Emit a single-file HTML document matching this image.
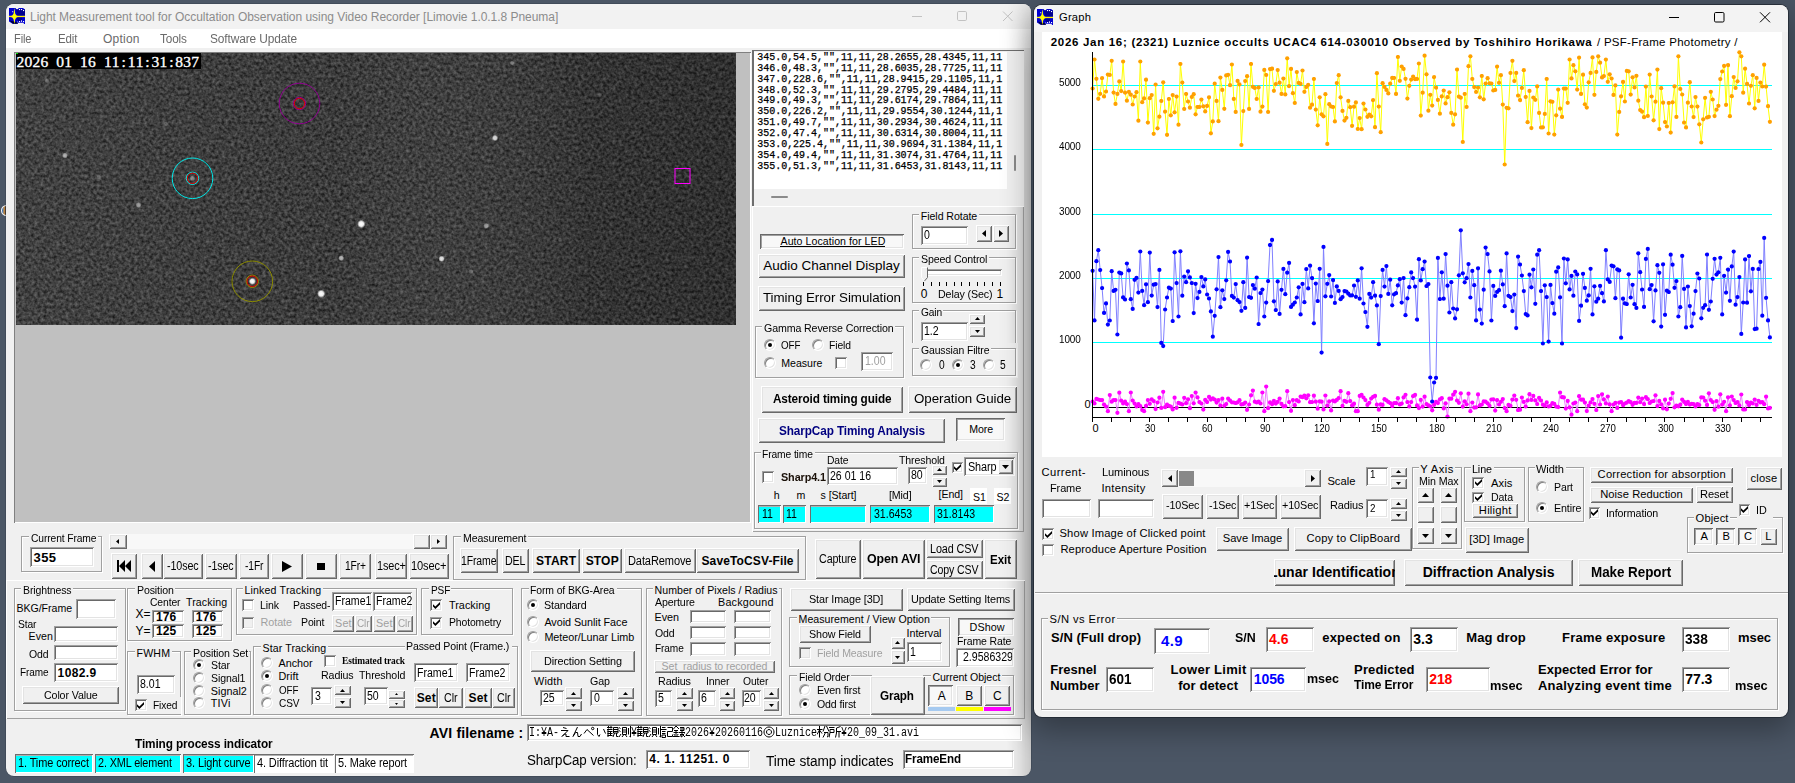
<!DOCTYPE html>
<html><head><meta charset="utf-8"><title>Limovie</title><style>
html,body{margin:0;padding:0}
body{width:1795px;height:783px;overflow:hidden;position:relative;background:#4b5665;font-family:"Liberation Sans",sans-serif;font-size:11px;color:#000}
div,span,svg{position:absolute;box-sizing:border-box}
.t{white-space:pre;display:block}
.b{background:#f0f0f0;box-shadow:inset 1px 1px 0 #fff,inset -1px -1px 0 #696969,inset 2px 2px 0 #e3e3e3,inset -2px -2px 0 #a0a0a0}
.pb{background:#f8f8f8;box-shadow:inset 1px 1px 0 #696969,inset -1px -1px 0 #fff,inset 2px 2px 0 #a0a0a0,inset -2px -2px 0 #e3e3e3}
.tb{background:#fff;box-shadow:inset 1px 1px 0 #a0a0a0,inset -1px -1px 0 #fff,inset 2px 2px 0 #696969,inset -2px -2px 0 #e3e3e3}
.tb1{background:#fff;box-shadow:inset 1px 1px 0 #6e6e6e,inset -1px -1px 0 #fff,inset 0 2px 0 #b0b0b0}
.gb{border:1px solid #a0a0a0;box-shadow:1px 1px 0 #fff,inset 1px 1px 0 #fff}
.rb{border-radius:50%;background:#fff;box-shadow:inset 1px 1px 0 #808080,inset -1px -1px 0 #e3e3e3;border:1px solid;border-color:#a0a0a0 #fff #fff #a0a0a0}
.rb i{position:absolute;left:3px;top:3px;width:4px;height:4px;border-radius:50%;background:#000}
.c{display:flex;align-items:center;justify-content:center}
.c svg{position:static}
.raised{box-shadow:inset 1px 1px 0 #fff,inset -1px -1px 0 #a0a0a0}
.sunk{box-shadow:inset 1px 1px 0 #a0a0a0,inset -1px -1px 0 #fff}
</style></head><body>
<div class="" style="left:0.5px;top:205px;width:11px;height:10.5px;border-radius:50%;background:linear-gradient(90deg,#1e6fd0,#d09040 25%,#181c28 45%);border:1.3px solid #f4f4f4;"></div>
<div class="" style="left:6px;top:4px;width:1025px;height:771.5px;background:#f0f0f0;border-radius:8px;overflow:hidden;box-shadow:0 0 0 0.5px rgba(40,48,60,.55);"><div style="left:0;top:0;width:1025px;height:25px;background:#f2f2f2"></div><div style="left:0;top:25px;width:1025px;height:18.5px;background:#fff"></div><div style="right:0;top:0;width:24px;height:772px;background:linear-gradient(90deg,rgba(0,0,0,0),rgba(0,0,0,.05) 45%,rgba(0,0,0,.17));-webkit-mask-image:linear-gradient(180deg,rgba(0,0,0,.3),#000 70px);mask-image:linear-gradient(180deg,rgba(0,0,0,.3),#000 70px)"></div></div>
<svg width="16" height="16" viewBox="0 0 16 16" style="left:9px;top:8px"><path d="M0 0H6.5L7.5 1.2H9L9.6 0H14L16 1.5V16H15L14.5 14.8H9L8.5 15.8H3.5L0 13.5Z" fill="#0000d0"/><path d="M7 1.5H16V7.5H8ZM7.5 9.5H13V13H9Z" fill="#000090"/><path d="M0 12L4 15.8H9L8.6 14.6L0.5 12.5Z" fill="#000030"/><rect x="0" y="7.8" width="16" height="1.3" fill="#fff000"/><path d="M5.4 0L6.2 5.4Q6.6 7.6 9.6 8.4Q6.6 9.2 6.2 11.4L5.4 16L4.6 11.4Q4.2 9.2 1.2 8.4Q4.2 7.6 4.6 5.4Z" fill="#ffff00"/><g fill="#fff"><rect x="10" y="1" width="1.1" height="1.1"/><rect x="12" y="1" width="1.1" height="1.1"/><rect x="14" y="2" width="1.1" height="1.1"/><rect x="3.2" y="3.2" width="1" height="1"/><rect x="10" y="13" width="1.1" height="1.1"/><rect x="12" y="12.4" width="1" height="1.4"/><rect x="14" y="13" width="1.1" height="1.1"/><rect x="8" y="13.3" width=".8" height="1.2" opacity=".6"/></g></svg>
<span class="t" style="left:30px;top:8.5px;height:16px;line-height:16px;font-size:12px;color:#8c8c8c;letter-spacing:-0.04px;">Light Measurement tool for Occultation Observation using Video Recorder [Limovie 1.0.1.8 Pneuma]</span>
<svg width="110" height="14" viewBox="0 0 110 14" style="left:908px;top:9px" fill="none" stroke="#c2c2c2" stroke-width="1"><path d="M4 7.5h10"/><rect x="49.5" y="2.5" width="9" height="9" rx="1.2"/><path d="M95 2.5l9.5 9.5M104.5 2.5l-9.5 9.5"/></svg>
<span class="t" style="left:13.6px;top:30.5px;height:16px;line-height:16px;font-size:12px;color:#6a6a6a;letter-spacing:-0.12px;transform:scaleX(0.9222);transform-origin:0 50%;">File</span>
<span class="t" style="left:57.5px;top:30.5px;height:16px;line-height:16px;font-size:12px;color:#6a6a6a;letter-spacing:-0.12px;transform:scaleX(0.9597);transform-origin:0 50%;">Edit</span>
<span class="t" style="left:103px;top:30.5px;height:16px;line-height:16px;font-size:12px;color:#6a6a6a;letter-spacing:0.23px;">Option</span>
<span class="t" style="left:160px;top:30.5px;height:16px;line-height:16px;font-size:12px;color:#6a6a6a;letter-spacing:-0.12px;transform:scaleX(0.9806);transform-origin:0 50%;">Tools</span>
<span class="t" style="left:210px;top:30.5px;height:16px;line-height:16px;font-size:12px;color:#6a6a6a;letter-spacing:-0.12px;transform:scaleX(0.992);transform-origin:0 50%;">Software Update</span>
<div class="" style="left:14px;top:52px;width:737px;height:470.5px;background:#c0c0c0;box-shadow:inset 1px 1px 0 #808080,inset -1px -1px 0 #fff;"></div>
<svg width="720" height="272" viewBox="0 0 720 272" style="left:16px;top:53px"><defs><filter id="nz" x="0" y="0" width="100%" height="100%" color-interpolation-filters="sRGB"><feTurbulence type="fractalNoise" baseFrequency="0.32" numOctaves="2" seed="7" result="n"/><feColorMatrix type="matrix" values="0.42 0 0 0 0.02  0.42 0 0 0 0.02  0.42 0 0 0 0.02  0 0 0 0 1"/></filter><radialGradient id="st"><stop offset="0" stop-color="#fff"/><stop offset=".55" stop-color="#fff" stop-opacity=".9"/><stop offset="1" stop-color="#fff" stop-opacity="0"/></radialGradient><linearGradient id="lg" x1="0" x2="1" y1="0" y2="0"><stop offset="0" stop-color="#fff" stop-opacity=".035"/><stop offset=".45" stop-color="#fff" stop-opacity=".005"/><stop offset=".8" stop-color="#000" stop-opacity=".12"/><stop offset="1" stop-color="#000" stop-opacity=".19"/></linearGradient></defs><rect width="720" height="272" fill="#383838"/><rect width="720" height="272" filter="url(#nz)"/><rect width="720" height="272" fill="url(#lg)"/>
<circle cx="345.3" cy="171" r="4.2" fill="url(#st)" opacity="1"/>
<circle cx="305.2" cy="240.7" r="4.2" fill="url(#st)" opacity="1"/>
<circle cx="236.3" cy="228.3" r="3.6" fill="url(#st)" opacity="1"/>
<circle cx="425.6" cy="205.8" r="3.2" fill="url(#st)" opacity="0.85"/>
<circle cx="479" cy="85" r="3.2" fill="url(#st)" opacity="0.8"/>
<circle cx="325.2" cy="205.2" r="3" fill="url(#st)" opacity="0.6"/>
<circle cx="470.3" cy="172.8" r="3" fill="url(#st)" opacity="0.5"/>
<circle cx="49" cy="102.5" r="3" fill="url(#st)" opacity="0.6"/>
<circle cx="122.5" cy="152" r="3" fill="url(#st)" opacity="0.5"/>
<circle cx="31" cy="27.8" r="2.6" fill="url(#st)" opacity="0.3"/>
<circle cx="496" cy="10" r="2.6" fill="url(#st)" opacity="0.3"/>
<circle cx="455" cy="218.4" r="2.6" fill="url(#st)" opacity="0.3"/>
<circle cx="83" cy="124" r="2.6" fill="url(#st)" opacity="0.25"/>
<circle cx="176.5" cy="125.3" r="3" fill="url(#st)" opacity="0.35"/>
<circle cx="150" cy="71" r="2.5" fill="url(#st)" opacity="0.2"/>
<circle cx="227" cy="247" r="2.5" fill="url(#st)" opacity="0.2"/>
<circle cx="584" cy="42" r="2.5" fill="url(#st)" opacity="0.15"/>
<circle cx="544" cy="187" r="2.5" fill="url(#st)" opacity="0.15"/>
<circle cx="283.5" cy="50.5" r="20.3" fill="none" stroke="#900090" stroke-width="1"/><circle cx="283.5" cy="50.5" r="6.2" fill="none" stroke="#900090" stroke-width="1"/><circle cx="283.5" cy="50.5" r="5.2" fill="none" stroke="#e00000" stroke-width="1"/>
<circle cx="176.5" cy="125.3" r="20.3" fill="none" stroke="#00e8e8" stroke-width="1"/><circle cx="176.5" cy="125.3" r="6.2" fill="none" stroke="#00e8e8" stroke-width="1"/><circle cx="176.5" cy="125.3" r="5.2" fill="none" stroke="#e00000" stroke-width="1"/>
<circle cx="236.3" cy="228.3" r="20.3" fill="none" stroke="#8c8c00" stroke-width="1"/><circle cx="236.3" cy="228.3" r="6.2" fill="none" stroke="#8c8c00" stroke-width="1"/><circle cx="236.3" cy="228.3" r="5.2" fill="none" stroke="#e00000" stroke-width="1"/>
<rect x="659.0" y="115.5" width="15" height="15" fill="none" stroke="#ff00ff" stroke-width="1"/>
</svg>
<div class="" style="left:16px;top:53px;width:184.5px;height:16px;background:#000;"></div>
<span class="t" style="left:16.5px;top:52.5px;height:17px;line-height:17px;font-family:'Liberation Serif',serif;font-weight:normal;-webkit-text-stroke:0.35px #fff;font-size:15.5px;color:#fff"><b style="font-weight:normal;display:inline-block;width:7.95px;text-align:center">2</b><b style="font-weight:normal;display:inline-block;width:7.95px;text-align:center">0</b><b style="font-weight:normal;display:inline-block;width:7.95px;text-align:center">2</b><b style="font-weight:normal;display:inline-block;width:7.95px;text-align:center">6</b><b style="font-weight:normal;display:inline-block;width:7.95px;text-align:center">&nbsp;</b><b style="font-weight:normal;display:inline-block;width:7.95px;text-align:center">0</b><b style="font-weight:normal;display:inline-block;width:7.95px;text-align:center">1</b><b style="font-weight:normal;display:inline-block;width:7.95px;text-align:center">&nbsp;</b><b style="font-weight:normal;display:inline-block;width:7.95px;text-align:center">1</b><b style="font-weight:normal;display:inline-block;width:7.95px;text-align:center">6</b><b style="font-weight:normal;display:inline-block;width:7.95px;text-align:center">&nbsp;</b><b style="font-weight:normal;display:inline-block;width:7.95px;text-align:center">1</b><b style="font-weight:normal;display:inline-block;width:7.95px;text-align:center">1</b><b style="font-weight:normal;display:inline-block;width:7.95px;text-align:center">:</b><b style="font-weight:normal;display:inline-block;width:7.95px;text-align:center">1</b><b style="font-weight:normal;display:inline-block;width:7.95px;text-align:center">1</b><b style="font-weight:normal;display:inline-block;width:7.95px;text-align:center">:</b><b style="font-weight:normal;display:inline-block;width:7.95px;text-align:center">3</b><b style="font-weight:normal;display:inline-block;width:7.95px;text-align:center">1</b><b style="font-weight:normal;display:inline-block;width:7.95px;text-align:center">:</b><b style="font-weight:normal;display:inline-block;width:7.95px;text-align:center">8</b><b style="font-weight:normal;display:inline-block;width:7.95px;text-align:center">3</b><b style="font-weight:normal;display:inline-block;width:7.95px;text-align:center">7</b></span>
<div style="left:16px;top:53px;width:2px;height:1px;background:#00e000"></div>
<div class="" style="left:752px;top:50px;width:271.5px;height:157px;background:#f0f0f0;box-shadow:inset 2px 1px 0 #6e6e6e;"></div>
<div class="" style="left:754px;top:52px;width:253px;height:136.5px;background:#fff;"></div>
<div class="t" style="left:757.3px;top:52.7px;width:246px;-webkit-text-stroke:0.25px #000;font-family:'Liberation Mono',monospace;font-size:10px;line-height:10.93px;letter-spacing:-0.03px;color:#000">345.0,54.5,"",11,11,28.2655,28.4345,11,11<br>346.0,48.3,"",11,11,28.6035,28.7725,11,11<br>347.0,228.6,"",11,11,28.9415,29.1105,11,1<br>348.0,52.3,"",11,11,29.2795,29.4484,11,11<br>349.0,49.3,"",11,11,29.6174,29.7864,11,11<br>350.0,226.2,"",11,11,29.9554,30.1244,11,1<br>351.0,49.7,"",11,11,30.2934,30.4624,11,11<br>352.0,47.4,"",11,11,30.6314,30.8004,11,11<br>353.0,225.4,"",11,11,30.9694,31.1384,11,1<br>354.0,49.4,"",11,11,31.3074,31.4764,11,11<br>355.0,51.3,"",11,11,31.6453,31.8143,11,11</div>
<div class="" style="left:1014px;top:154.5px;width:2px;height:16.5px;background:#8a8a8a;border-radius:1px;"></div>
<div class="" style="left:771px;top:196px;width:17px;height:2px;background:#8a8a8a;border-radius:1px;"></div>
<div class="raised" style="left:752px;top:206px;width:271.5px;height:325.5px;"></div>
<div class="pb" style="left:760px;top:233.5px;width:144px;height:15.5px;"></div>
<span class="t" style="left:780.5px;top:234.35px;height:15px;line-height:15px;font-size:10.6px;letter-spacing:0.06px;">Auto Location for LED</span>
<div style="left:779.5px;top:246.4px;width:105.5px;height:1px;background:#000"></div>
<div class="b" style="left:758px;top:253.5px;width:147px;height:24.5px;"></div>
<span class="t" style="left:763.25px;top:257.05px;height:18px;line-height:18px;font-size:13.5px;">Audio Channel Display</span>
<div class="b" style="left:758px;top:285.5px;width:147px;height:25px;"></div>
<span class="t" style="left:762.5px;top:289.3px;height:18px;line-height:18px;font-size:13.5px;letter-spacing:-0.05px;transform:scaleX(0.9897);transform-origin:0 50%;">Timing Error Simulation</span>
<div class="gb" style="left:912px;top:214px;width:103.5px;height:34.8px;"></div>
<div class="" style="left:919.3px;top:210px;width:59.5px;height:13px;background:#f0f0f0;"></div>
<span class="t" style="left:920.8px;top:208.9px;height:15px;line-height:15px;font-size:10.6px;letter-spacing:-0.06px;">Field Rotate</span>
<div class="tb" style="left:920.5px;top:225.5px;width:47.5px;height:19.5px;"></div>
<span class="t" style="left:924px;top:227.25px;height:16px;line-height:16px;font-size:12px;transform:scaleX(0.88);transform-origin:0 50%;">0</span>
<div class="b c" style="left:976px;top:225px;width:16px;height:17px;"><svg width="4" height="7" viewBox="0 0 4 7"><polygon points="4,0 4,7 0,3.5" fill="#000"/></svg></div>
<div class="b c" style="left:993px;top:225px;width:16px;height:17px;"><svg width="4" height="7" viewBox="0 0 4 7"><polygon points="0,0 0,7 4,3.5" fill="#000"/></svg></div>
<div class="gb" style="left:912px;top:257px;width:103.5px;height:46.3px;"></div>
<div class="" style="left:919.3px;top:253px;width:69.5px;height:13px;background:#f0f0f0;"></div>
<span class="t" style="left:920.8px;top:251.9px;height:15px;line-height:15px;font-size:10.6px;letter-spacing:-0.12px;transform:scaleX(1.0026);transform-origin:0 50%;">Speed Control</span>
<div class="tb" style="left:922.5px;top:269px;width:79.5px;height:7px;"></div>
<div class="" style="left:923.3px;top:282.3px;width:1px;height:3.3px;background:#000;"></div>
<div class="" style="left:930.93px;top:282.3px;width:1px;height:3.3px;background:#000;"></div>
<div class="" style="left:938.56px;top:282.3px;width:1px;height:3.3px;background:#000;"></div>
<div class="" style="left:946.19px;top:282.3px;width:1px;height:3.3px;background:#000;"></div>
<div class="" style="left:953.82px;top:282.3px;width:1px;height:3.3px;background:#000;"></div>
<div class="" style="left:961.45px;top:282.3px;width:1px;height:3.3px;background:#000;"></div>
<div class="" style="left:969.08px;top:282.3px;width:1px;height:3.3px;background:#000;"></div>
<div class="" style="left:976.71px;top:282.3px;width:1px;height:3.3px;background:#000;"></div>
<div class="" style="left:984.34px;top:282.3px;width:1px;height:3.3px;background:#000;"></div>
<div class="" style="left:991.97px;top:282.3px;width:1px;height:3.3px;background:#000;"></div>
<div class="" style="left:999.6px;top:282.3px;width:1px;height:3.3px;background:#000;"></div>
<svg width="8" height="15" viewBox="0 0 8 15" style="left:920.5px;top:266.5px"><path d="M0.5 0.5h6v10l-3 3.5l-3-3.5z" fill="#f0f0f0" stroke="#fff" stroke-width="1"/><path d="M6.5 0.5v10l-3 3.5" fill="none" stroke="#696969" stroke-width="1"/></svg>
<span class="t" style="left:920.8px;top:286px;height:16px;line-height:16px;font-size:12px;letter-spacing:-0.4px;">0</span>
<span class="t" style="left:937.6px;top:286.5px;height:15px;line-height:15px;font-size:10.8px;letter-spacing:-0.12px;transform:scaleX(0.9888);transform-origin:0 50%;">Delay (Sec)</span>
<span class="t" style="left:996.5px;top:286px;height:16px;line-height:16px;font-size:12px;letter-spacing:-0.4px;">1</span>
<div class="gb" style="left:912px;top:310px;width:103.5px;height:41.5px;"></div>
<div class="" style="left:919.3px;top:306px;width:24.2px;height:13px;background:#f0f0f0;"></div>
<span class="t" style="left:920.8px;top:304.9px;height:15px;line-height:15px;font-size:10.6px;letter-spacing:-0.12px;transform:scaleX(0.9623);transform-origin:0 50%;">Gain</span>
<div class="tb" style="left:920.5px;top:322px;width:47.5px;height:18.5px;"></div>
<span class="t" style="left:923.5px;top:323.25px;height:16px;line-height:16px;font-size:12px;transform:scaleX(0.88);transform-origin:0 50%;">1.2</span>
<div class="b c" style="left:969.3px;top:313.7px;width:16px;height:10.6px;"><svg width="5" height="3" viewBox="0 0 5 3"><polygon points="0,3 5,3 2.5,0" fill="#000"/></svg></div>
<div class="b c" style="left:969.3px;top:325.7px;width:16px;height:11.8px;"><svg width="5" height="3" viewBox="0 0 5 3"><polygon points="0,0 5,0 2.5,3" fill="#000"/></svg></div>
<div class="" style="left:910px;top:343px;width:108px;height:35px;background:#f0f0f0;"></div>
<div class="gb" style="left:912px;top:348.3px;width:103.5px;height:28px;"></div>
<div class="" style="left:919.3px;top:344.3px;width:71.5px;height:13px;background:#f0f0f0;"></div>
<span class="t" style="left:920.8px;top:343.2px;height:15px;line-height:15px;font-size:10.6px;letter-spacing:-0.12px;transform:scaleX(0.9842);transform-origin:0 50%;">Gaussian Filtre</span>
<div class="rb" style="left:920.4px;top:358.6px;width:12px;height:12px;"></div>
<span class="t" style="left:938.9px;top:357px;height:16px;line-height:16px;font-size:12px;letter-spacing:-0.4px;transform:scaleX(0.85);transform-origin:0 50%;">0</span>
<div class="rb" style="left:952px;top:358.6px;width:12px;height:12px;"><i></i></div>
<span class="t" style="left:969.6px;top:357px;height:16px;line-height:16px;font-size:12px;letter-spacing:-0.4px;transform:scaleX(0.85);transform-origin:0 50%;">3</span>
<div class="rb" style="left:983px;top:358.6px;width:12px;height:12px;"></div>
<span class="t" style="left:1000.2px;top:357px;height:16px;line-height:16px;font-size:12px;letter-spacing:-0.4px;transform:scaleX(0.85);transform-origin:0 50%;">5</span>
<div class="gb" style="left:754.5px;top:326px;width:149.5px;height:52px;"></div>
<div class="" style="left:762.1px;top:322px;width:132.7px;height:13px;background:#f0f0f0;"></div>
<span class="t" style="left:763.6px;top:320.9px;height:15px;line-height:15px;font-size:10.6px;letter-spacing:-0.12px;transform:scaleX(1.0039);transform-origin:0 50%;">Gamma Reverse Correction</span>
<div class="rb" style="left:763.6px;top:338.7px;width:12px;height:12px;"><i></i></div>
<span class="t" style="left:781.3px;top:337.5px;height:15px;line-height:15px;font-size:10.6px;letter-spacing:-0.12px;transform:scaleX(0.9258);transform-origin:0 50%;">OFF</span>
<div class="rb" style="left:811.7px;top:338.7px;width:12px;height:12px;"></div>
<span class="t" style="left:829.3px;top:337.5px;height:15px;line-height:15px;font-size:10.6px;letter-spacing:-0.12px;transform:scaleX(0.978);transform-origin:0 50%;">Field</span>
<div class="rb" style="left:763.6px;top:357px;width:12px;height:12px;"></div>
<span class="t" style="left:781.3px;top:356px;height:15px;line-height:15px;font-size:10.6px;letter-spacing:-0.04px;">Measure</span>
<div class="tb" style="left:835px;top:357.2px;width:12px;height:12px;"></div>
<div class="tb" style="left:861px;top:351.5px;width:32px;height:19.5px;"></div>
<span class="t" style="left:864.5px;top:353.25px;height:16px;line-height:16px;font-size:12px;color:#a0a0a0;transform:scaleX(0.88);transform-origin:0 50%;">1.00</span>
<div class="b" style="left:760.5px;top:385.5px;width:142.5px;height:27px;"></div>
<span class="t" style="left:772.5px;top:391.3px;height:16px;line-height:16px;font-size:12px;font-weight:bold;letter-spacing:-0.12px;transform:scaleX(0.9799);transform-origin:0 50%;">Asteroid timing guide</span>
<div class="b" style="left:908px;top:385.5px;width:109px;height:27px;"></div>
<span class="t" style="left:913.85px;top:390.3px;height:18px;line-height:18px;font-size:13.5px;letter-spacing:-0.05px;transform:scaleX(0.9892);transform-origin:0 50%;">Operation Guide</span>
<div class="b" style="left:758px;top:417.5px;width:187px;height:25.5px;"></div>
<span class="t" style="left:778.5px;top:422.55px;height:16px;line-height:16px;font-size:12.5px;font-weight:bold;color:#000080;letter-spacing:-0.12px;transform:scaleX(0.9424);transform-origin:0 50%;">SharpCap Timing Analysis</span>
<div class="pb" style="left:956px;top:417.5px;width:48.5px;height:23.3px;"></div>
<span class="t" style="left:969.35px;top:422.25px;height:15px;line-height:15px;font-size:10.6px;letter-spacing:-0.12px;">More</span>
<div class="gb" style="left:753.5px;top:452px;width:264.1px;height:77.3px;"></div>
<div class="" style="left:760.8px;top:448px;width:54px;height:13px;background:#f0f0f0;"></div>
<span class="t" style="left:762.3px;top:446.9px;height:15px;line-height:15px;font-size:10.6px;letter-spacing:-0.12px;transform:scaleX(0.9711);transform-origin:0 50%;">Frame time</span>
<div class="tb" style="left:762.3px;top:471px;width:12px;height:12px;"></div>
<span class="t" style="left:780.9px;top:469.3px;height:16px;line-height:16px;font-size:11.5px;font-weight:bold;color:#1a1008;letter-spacing:-0.12px;transform:scaleX(0.9427);transform-origin:0 50%;">Sharp4.1</span>
<span class="t" style="left:826.6px;top:452.5px;height:15px;line-height:15px;font-size:10.6px;letter-spacing:-0.12px;transform:scaleX(0.9759);transform-origin:0 50%;">Date</span>
<div class="tb" style="left:826.6px;top:466.5px;width:71.2px;height:18.7px;"></div>
<span class="t" style="left:829.5px;top:467.85px;height:16px;line-height:16px;font-size:12px;transform:scaleX(0.88);transform-origin:0 50%;">26 01 16</span>
<span class="t" style="left:899.3px;top:452.5px;height:15px;line-height:15px;font-size:10.6px;letter-spacing:-0.12px;transform:scaleX(0.9962);transform-origin:0 50%;">Threshold</span>
<div class="tb" style="left:908.2px;top:466.5px;width:18.6px;height:17px;"></div>
<span class="t" style="left:911px;top:467px;height:16px;line-height:16px;font-size:12px;transform:scaleX(0.88);transform-origin:0 50%;">80</span>
<div class="b c" style="left:932.4px;top:465px;width:15px;height:9.7px;"><svg width="5" height="3" viewBox="0 0 5 3"><polygon points="0,3 5,3 2.5,0" fill="#000"/></svg></div>
<div class="b c" style="left:932.4px;top:476.7px;width:15px;height:10.5px;"><svg width="5" height="3" viewBox="0 0 5 3"><polygon points="0,0 5,0 2.5,3" fill="#000"/></svg></div>
<div class="tb" style="left:951.6px;top:461.5px;width:11.5px;height:11.5px;"><svg width="9" height="9" viewBox="0 0 9 9" style="position:absolute;left:1.25px;top:1.25px"><path d="M1 3.2 L3.4 5.6 L8 1 L8 3.4 L3.4 8 L1 5.6 Z" fill="#000"/></svg></div>
<div class="tb" style="left:964.2px;top:457.2px;width:50.8px;height:19px;"></div>
<span class="t" style="left:967.6px;top:458.7px;height:16px;line-height:16px;font-size:12px;letter-spacing:-0.12px;transform:scaleX(0.9036);transform-origin:0 50%;">Sharp</span>
<div class="b c" style="left:998.3px;top:459.2px;width:14.7px;height:15px;"><svg width="7" height="4" viewBox="0 0 7 4"><polygon points="0,0 7,0 3.5,4" fill="#000"/></svg></div>
<span class="t" style="left:773.8px;top:488px;height:15px;line-height:15px;font-size:10.6px;letter-spacing:-0.4px;">h</span>
<span class="t" style="left:796.4px;top:488px;height:15px;line-height:15px;font-size:10.6px;letter-spacing:-0.4px;">m</span>
<span class="t" style="left:820.6px;top:488px;height:15px;line-height:15px;font-size:10.6px;letter-spacing:-0.07px;">s [Start]</span>
<span class="t" style="left:888.8px;top:488px;height:15px;line-height:15px;font-size:10.6px;letter-spacing:-0.12px;transform:scaleX(1.0049);transform-origin:0 50%;">[Mid]</span>
<span class="t" style="left:938.5px;top:486.5px;height:15px;line-height:15px;font-size:10.6px;letter-spacing:-0.06px;">[End]</span>
<div class="" style="left:970.4px;top:487.5px;width:17px;height:16px;background:#fff;"></div>
<span class="t" style="left:973px;top:489.5px;height:15px;line-height:15px;font-size:10.6px;">S1</span>
<div class="" style="left:993.8px;top:487.5px;width:17.5px;height:16px;background:#fff;"></div>
<span class="t" style="left:996.5px;top:489.5px;height:15px;line-height:15px;font-size:10.6px;">S2</span>
<div class="tb1" style="left:758.2px;top:504.5px;width:23.1px;height:18.7px;background:#00ffff;"></div>
<span class="t" style="left:761.5px;top:505.85px;height:16px;line-height:16px;font-size:12px;transform:scaleX(0.88);transform-origin:0 50%;">11</span>
<div class="tb1" style="left:782.5px;top:504.5px;width:23.5px;height:18.7px;background:#00ffff;"></div>
<span class="t" style="left:786px;top:505.85px;height:16px;line-height:16px;font-size:12px;transform:scaleX(0.88);transform-origin:0 50%;">11</span>
<div class="tb1" style="left:810px;top:504.5px;width:56px;height:18.7px;background:#00ffff;"></div>
<div class="tb1" style="left:870.2px;top:504.5px;width:59.4px;height:18.7px;background:#00ffff;"></div>
<span class="t" style="left:873.5px;top:505.85px;height:16px;line-height:16px;font-size:12px;transform:scaleX(0.88);transform-origin:0 50%;">31.6453</span>
<div class="tb1" style="left:934px;top:504.5px;width:59.6px;height:18.7px;background:#00ffff;"></div>
<span class="t" style="left:937.2px;top:505.85px;height:16px;line-height:16px;font-size:12px;transform:scaleX(0.88);transform-origin:0 50%;">31.8143</span>
<div class="gb" style="left:21px;top:536px;width:81px;height:35.5px;"></div>
<div class="" style="left:29.1px;top:532px;width:68.5px;height:13px;background:#f0f0f0;"></div>
<span class="t" style="left:30.6px;top:530.9px;height:15px;line-height:15px;font-size:10.6px;letter-spacing:-0.12px;transform:scaleX(0.9707);transform-origin:0 50%;">Current Frame</span>
<div class="tb" style="left:30.2px;top:547.3px;width:63.8px;height:19.7px;"></div>
<span class="t" style="left:33.5px;top:548.65px;height:17px;line-height:17px;font-size:13px;font-weight:bold;letter-spacing:0.4px;">355</span>
<div class="" style="left:109px;top:534px;width:338px;height:14.7px;background:#f8f8f8;"></div>
<div class="b c" style="left:109px;top:534px;width:17.7px;height:14.7px;"><svg width="3" height="5" viewBox="0 0 3 5"><polygon points="3,0 3,5 0,2.5" fill="#000"/></svg></div>
<div class="b c" style="left:430px;top:534px;width:17px;height:14.7px;"><svg width="3" height="5" viewBox="0 0 3 5"><polygon points="0,0 0,5 3,2.5" fill="#000"/></svg></div>
<div class="b" style="left:413px;top:534px;width:17px;height:14.7px;"></div>
<div class="b" style="left:111px;top:553px;width:26px;height:26px;"></div>
<div class="b" style="left:141px;top:553px;width:22px;height:26px;"></div>
<div class="b" style="left:163px;top:553px;width:40px;height:26px;"></div>
<span class="t" style="left:167.15px;top:558.3px;height:16px;line-height:16px;font-size:12px;letter-spacing:-0.12px;transform:scaleX(0.895);transform-origin:0 50%;">-10sec</span>
<div class="b" style="left:205px;top:553px;width:32px;height:26px;"></div>
<span class="t" style="left:208.25px;top:558.3px;height:16px;line-height:16px;font-size:12px;letter-spacing:-0.12px;transform:scaleX(0.8835);transform-origin:0 50%;">-1sec</span>
<div class="b" style="left:239px;top:553px;width:30px;height:26px;"></div>
<span class="t" style="left:244.75px;top:558.3px;height:16px;line-height:16px;font-size:12px;letter-spacing:-0.12px;transform:scaleX(0.855);transform-origin:0 50%;">-1Fr</span>
<div class="b" style="left:271px;top:553px;width:32px;height:26px;"></div>
<div class="b" style="left:305px;top:553px;width:32px;height:26px;"></div>
<div class="b" style="left:339px;top:553px;width:32px;height:26px;"></div>
<span class="t" style="left:344.5px;top:558.3px;height:16px;line-height:16px;font-size:12px;letter-spacing:-0.12px;transform:scaleX(0.852);transform-origin:0 50%;">1Fr+</span>
<div class="b" style="left:375px;top:553px;width:32px;height:26px;"></div>
<span class="t" style="left:376.5px;top:558.3px;height:16px;line-height:16px;font-size:12px;letter-spacing:-0.12px;transform:scaleX(0.9098);transform-origin:0 50%;">1sec+</span>
<div class="b" style="left:409px;top:553px;width:40px;height:26px;"></div>
<span class="t" style="left:411.25px;top:558.3px;height:16px;line-height:16px;font-size:12px;letter-spacing:-0.12px;transform:scaleX(0.9238);transform-origin:0 50%;">10sec+</span>
<svg width="14" height="12" viewBox="0 0 14 12" style="left:117.3px;top:560.3px"><rect x="0" y="0" width="2" height="12"/><path d="M8 0v12l-6-6zM14 0v12l-6-6z"/></svg>
<svg width="6" height="11" viewBox="0 0 6 11" style="left:148.5px;top:560.7px"><path d="M6 0v11l-6-5.5z"/></svg>
<svg width="10" height="11" viewBox="0 0 10 11" style="left:281.5px;top:560.7px"><path d="M0 0v11l10-5.5z"/></svg>
<div class="" style="left:317px;top:563px;width:8px;height:7px;background:#000;"></div>
<div class="gb" style="left:453px;top:536px;width:353px;height:43.5px;"></div>
<div class="" style="left:461.1px;top:532px;width:66.6px;height:13px;background:#f0f0f0;"></div>
<span class="t" style="left:462.6px;top:530.9px;height:15px;line-height:15px;font-size:10.6px;letter-spacing:-0.12px;transform:scaleX(0.9999);transform-origin:0 50%;">Measurement</span>
<div class="b" style="left:460px;top:548px;width:38px;height:25px;"></div>
<span class="t" style="left:461.25px;top:552.8px;height:16px;line-height:16px;font-size:12px;letter-spacing:-0.12px;transform:scaleX(0.8713);transform-origin:0 50%;">1Frame</span>
<div class="b" style="left:502px;top:548px;width:27px;height:25px;"></div>
<span class="t" style="left:505.25px;top:552.8px;height:16px;line-height:16px;font-size:12px;letter-spacing:-0.12px;transform:scaleX(0.8873);transform-origin:0 50%;">DEL</span>
<div class="b" style="left:532px;top:548px;width:48px;height:25px;"></div>
<span class="t" style="left:536px;top:552.8px;height:16px;line-height:16px;font-size:12px;font-weight:bold;letter-spacing:0.22px;">START</span>
<div class="b" style="left:582.3px;top:548px;width:39.7px;height:25px;"></div>
<span class="t" style="left:585.65px;top:552.8px;height:16px;line-height:16px;font-size:12px;font-weight:bold;letter-spacing:0.18px;">STOP</span>
<div class="b" style="left:624px;top:548px;width:72px;height:25px;"></div>
<span class="t" style="left:628.25px;top:552.8px;height:16px;line-height:16px;font-size:12px;letter-spacing:-0.12px;transform:scaleX(0.9209);transform-origin:0 50%;">DataRemove</span>
<div class="b" style="left:696px;top:548px;width:103px;height:25px;"></div>
<span class="t" style="left:701.5px;top:552.8px;height:16px;line-height:16px;font-size:12px;font-weight:bold;letter-spacing:0.12px;">SaveToCSV-File</span>
<div class="b" style="left:814.5px;top:539.3px;width:46.2px;height:39.4px;"></div>
<span class="t" style="left:818.85px;top:551.3px;height:16px;line-height:16px;font-size:12px;letter-spacing:-0.12px;transform:scaleX(0.8935);transform-origin:0 50%;">Capture</span>
<div class="b" style="left:862px;top:539.3px;width:63px;height:39.4px;"></div>
<span class="t" style="left:866.75px;top:551.3px;height:16px;line-height:16px;font-size:12.5px;font-weight:bold;letter-spacing:-0.12px;transform:scaleX(0.9903);transform-origin:0 50%;">Open AVI</span>
<div class="b" style="left:926px;top:539.3px;width:57px;height:19.2px;"></div>
<span class="t" style="left:930.25px;top:541.2px;height:16px;line-height:16px;font-size:12px;letter-spacing:-0.12px;transform:scaleX(0.9004);transform-origin:0 50%;">Load CSV</span>
<div class="b" style="left:926px;top:559.5px;width:57px;height:19.2px;"></div>
<span class="t" style="left:930.25px;top:561.9px;height:16px;line-height:16px;font-size:12px;letter-spacing:-0.12px;transform:scaleX(0.8789);transform-origin:0 50%;">Copy CSV</span>
<div class="b" style="left:984px;top:539.3px;width:33px;height:39.4px;"></div>
<span class="t" style="left:990px;top:550.8px;height:17px;line-height:17px;font-size:13px;font-weight:bold;letter-spacing:-0.05px;transform:scaleX(0.8864);transform-origin:0 50%;">Exit</span>
<div class="raised" style="left:6px;top:579.5px;width:1018.5px;height:139.5px;"></div>
<div class="gb" style="left:13.5px;top:588.2px;width:112.5px;height:122.8px;"></div>
<div class="" style="left:21.1px;top:584.2px;width:51.6px;height:13px;background:#f0f0f0;"></div>
<span class="t" style="left:22.6px;top:583.1px;height:15px;line-height:15px;font-size:10.6px;letter-spacing:-0.12px;transform:scaleX(0.9918);transform-origin:0 50%;">Brightness</span>
<span class="t" style="left:16.4px;top:600.5px;height:15px;line-height:15px;font-size:10.6px;letter-spacing:-0.03px;">BKG/Frame</span>
<div class="tb" style="left:76.3px;top:599.4px;width:39.7px;height:19.4px;"></div>
<span class="t" style="left:18.2px;top:616.5px;height:15px;line-height:15px;font-size:10.6px;letter-spacing:-0.12px;transform:scaleX(0.9696);transform-origin:0 50%;">Star</span>
<span class="t" style="left:28.6px;top:629px;height:15px;line-height:15px;font-size:10.6px;letter-spacing:0.08px;">Even</span>
<div class="tb" style="left:54.3px;top:625.5px;width:63.5px;height:16px;"></div>
<span class="t" style="left:28.6px;top:646.7px;height:15px;line-height:15px;font-size:10.6px;letter-spacing:-0.12px;transform:scaleX(0.9901);transform-origin:0 50%;">Odd</span>
<div class="tb" style="left:54.3px;top:644.7px;width:63.5px;height:15.8px;"></div>
<span class="t" style="left:20.4px;top:665.2px;height:15px;line-height:15px;font-size:10.6px;letter-spacing:-0.12px;transform:scaleX(0.9454);transform-origin:0 50%;">Frame</span>
<div class="tb" style="left:54.3px;top:663.2px;width:63.5px;height:18.6px;"></div>
<span class="t" style="left:57.6px;top:664.5px;height:16px;line-height:16px;font-size:12px;font-weight:bold;letter-spacing:0.38px;">1082.9</span>
<div class="b" style="left:22.2px;top:686.3px;width:97.1px;height:17.5px;"></div>
<span class="t" style="left:43.9px;top:687.85px;height:15px;line-height:15px;font-size:10.6px;letter-spacing:-0.12px;transform:scaleX(1.0056);transform-origin:0 50%;">Color Value</span>
<div class="gb" style="left:127.3px;top:588.2px;width:104.7px;height:53.1px;"></div>
<div class="" style="left:135px;top:584.2px;width:39.8px;height:13px;background:#f0f0f0;"></div>
<span class="t" style="left:136.5px;top:583.1px;height:15px;line-height:15px;font-size:10.6px;letter-spacing:-0.12px;transform:scaleX(0.9981);transform-origin:0 50%;">Position</span>
<span class="t" style="left:150.4px;top:595px;height:15px;line-height:15px;font-size:10.6px;letter-spacing:-0.12px;transform:scaleX(0.9771);transform-origin:0 50%;">Center</span>
<span class="t" style="left:186px;top:595px;height:15px;line-height:15px;font-size:10.6px;letter-spacing:0.12px;">Tracking</span>
<span class="t" style="left:135.6px;top:606px;height:16px;line-height:16px;font-size:12px;">X=</span>
<span class="t" style="left:135.6px;top:622.5px;height:16px;line-height:16px;font-size:12px;">Y=</span>
<div class="tb" style="left:152.2px;top:609.7px;width:31.4px;height:13.7px;"></div>
<span class="t" style="left:155.9px;top:609.05px;height:16px;line-height:16px;font-size:12px;font-weight:bold;letter-spacing:0.19px;">176</span>
<div class="tb" style="left:152.2px;top:624.2px;width:31.4px;height:13.4px;"></div>
<span class="t" style="left:155.9px;top:623.4px;height:16px;line-height:16px;font-size:12px;font-weight:bold;letter-spacing:0.19px;">125</span>
<div class="tb" style="left:192.1px;top:609.7px;width:31.4px;height:13.7px;"></div>
<span class="t" style="left:195.8px;top:609.05px;height:16px;line-height:16px;font-size:12px;font-weight:bold;letter-spacing:0.19px;">176</span>
<div class="tb" style="left:192.1px;top:624.2px;width:31.4px;height:13.4px;"></div>
<span class="t" style="left:195.8px;top:623.4px;height:16px;line-height:16px;font-size:12px;font-weight:bold;letter-spacing:0.19px;">125</span>
<div class="gb" style="left:127.3px;top:651.3px;width:54.2px;height:63.5px;"></div>
<div class="" style="left:135px;top:647.3px;width:36.5px;height:13px;background:#f0f0f0;"></div>
<span class="t" style="left:136.5px;top:646.2px;height:15px;line-height:15px;font-size:10.6px;letter-spacing:0.18px;">FWHM</span>
<div class="tb" style="left:137px;top:674.5px;width:37.5px;height:19.5px;"></div>
<span class="t" style="left:140.3px;top:676.25px;height:16px;line-height:16px;font-size:12px;transform:scaleX(0.88);transform-origin:0 50%;">8.01</span>
<div class="" style="left:147px;top:697px;width:34px;height:17px;background:#f0f0f0;"></div>
<div class="tb" style="left:134.5px;top:699.4px;width:12px;height:12px;"><svg width="9" height="9" viewBox="0 0 9 9" style="position:absolute;left:1.5px;top:1.5px"><path d="M1 3.2 L3.4 5.6 L8 1 L8 3.4 L3.4 8 L1 5.6 Z" fill="#000"/></svg></div>
<span class="t" style="left:152.8px;top:698.3px;height:15px;line-height:15px;font-size:10.6px;letter-spacing:-0.12px;transform:scaleX(0.963);transform-origin:0 50%;">Fixed</span>
<div class="gb" style="left:183.5px;top:651.3px;width:67.5px;height:63.5px;"></div>
<div class="" style="left:191.2px;top:647.3px;width:58.3px;height:13px;background:#f0f0f0;"></div>
<span class="t" style="left:192.7px;top:646.2px;height:15px;line-height:15px;font-size:10.6px;letter-spacing:-0.12px;transform:scaleX(1.001);transform-origin:0 50%;">Position Set</span>
<div class="rb" style="left:193px;top:659.4px;width:12px;height:12px;"><i></i></div>
<span class="t" style="left:210.8px;top:658.2px;height:15px;line-height:15px;font-size:10.8px;letter-spacing:-0.12px;transform:scaleX(0.977);transform-origin:0 50%;">Star</span>
<div class="rb" style="left:193px;top:671.7px;width:12px;height:12px;"></div>
<span class="t" style="left:210.8px;top:670.5px;height:15px;line-height:15px;font-size:10.8px;letter-spacing:-0.12px;transform:scaleX(0.9771);transform-origin:0 50%;">Signal1</span>
<div class="rb" style="left:193px;top:684.8px;width:12px;height:12px;"></div>
<span class="t" style="left:210.8px;top:683.6px;height:15px;line-height:15px;font-size:10.8px;">Signal2</span>
<div class="rb" style="left:193px;top:697.1px;width:12px;height:12px;"></div>
<span class="t" style="left:210.8px;top:695.9px;height:15px;line-height:15px;font-size:10.8px;letter-spacing:0.16px;">TIVi</span>
<div class="gb" style="left:235.5px;top:588.2px;width:181.5px;height:46.8px;"></div>
<div class="" style="left:242.9px;top:584.2px;width:79.7px;height:13px;background:#f0f0f0;"></div>
<span class="t" style="left:244.4px;top:583.1px;height:15px;line-height:15px;font-size:10.6px;letter-spacing:0.18px;">Linked Tracking</span>
<div class="tb" style="left:242.3px;top:599.3px;width:12px;height:12px;"></div>
<span class="t" style="left:260.4px;top:597.8px;height:15px;line-height:15px;font-size:10.8px;letter-spacing:-0.12px;transform:scaleX(0.9767);transform-origin:0 50%;">Link</span>
<span class="t" style="left:292.7px;top:598.1px;height:15px;line-height:15px;font-size:10.8px;letter-spacing:-0.12px;transform:scaleX(0.964);transform-origin:0 50%;">Passed-</span>
<div class="tb" style="left:332.4px;top:591.6px;width:39.6px;height:19.1px;"></div>
<span class="t" style="left:335.3px;top:593.15px;height:16px;line-height:16px;font-size:12px;transform:scaleX(0.88);transform-origin:0 50%;">Frame1</span>
<div class="tb" style="left:372.8px;top:591.6px;width:39.7px;height:19.1px;"></div>
<span class="t" style="left:375.7px;top:593.15px;height:16px;line-height:16px;font-size:12px;transform:scaleX(0.88);transform-origin:0 50%;">Frame2</span>
<div class="tb" style="left:242.3px;top:616.8px;width:12px;height:12px;background:#f0f0f0;"></div>
<span class="t" style="left:260.4px;top:615px;height:15px;line-height:15px;font-size:10.8px;color:#a0a0a0;letter-spacing:-0.02px;">Rotate</span>
<span class="t" style="left:300.7px;top:614.5px;height:15px;line-height:15px;font-size:10.8px;letter-spacing:-0.12px;transform:scaleX(0.9736);transform-origin:0 50%;">Point</span>
<div class="b" style="left:332.4px;top:615.2px;width:21.9px;height:16.4px;"></div>
<span class="t" style="left:335.1px;top:616.2px;height:15px;line-height:15px;font-size:10.8px;color:#a0a0a0;letter-spacing:0.14px;">Set</span>
<div class="b" style="left:355.2px;top:615.2px;width:16.8px;height:16.4px;"></div>
<span class="t" style="left:357.35px;top:616.2px;height:15px;line-height:15px;font-size:10.8px;color:#a0a0a0;letter-spacing:-0.12px;transform:scaleX(0.9221);transform-origin:0 50%;">Clr</span>
<div class="b" style="left:373.2px;top:615.2px;width:21.9px;height:16.4px;"></div>
<span class="t" style="left:375.9px;top:616.2px;height:15px;line-height:15px;font-size:10.8px;color:#a0a0a0;letter-spacing:0.14px;">Set</span>
<div class="b" style="left:396px;top:615.2px;width:16.8px;height:16.4px;"></div>
<span class="t" style="left:398.15px;top:616.2px;height:15px;line-height:15px;font-size:10.8px;color:#a0a0a0;letter-spacing:-0.12px;transform:scaleX(0.9221);transform-origin:0 50%;">Clr</span>
<div class="gb" style="left:421.3px;top:588.2px;width:91.5px;height:46.8px;"></div>
<div class="" style="left:429px;top:584.2px;width:22.4px;height:13px;background:#f0f0f0;"></div>
<span class="t" style="left:430.5px;top:583.1px;height:15px;line-height:15px;font-size:10.6px;letter-spacing:-0.12px;transform:scaleX(0.9521);transform-origin:0 50%;">PSF</span>
<div class="tb" style="left:430.4px;top:599.3px;width:12px;height:12px;"><svg width="9" height="9" viewBox="0 0 9 9" style="position:absolute;left:1.5px;top:1.5px"><path d="M1 3.2 L3.4 5.6 L8 1 L8 3.4 L3.4 8 L1 5.6 Z" fill="#000"/></svg></div>
<span class="t" style="left:449px;top:597.8px;height:15px;line-height:15px;font-size:10.8px;letter-spacing:0.04px;">Tracking</span>
<div class="tb" style="left:430.4px;top:616.8px;width:12px;height:12px;"><svg width="9" height="9" viewBox="0 0 9 9" style="position:absolute;left:1.5px;top:1.5px"><path d="M1 3.2 L3.4 5.6 L8 1 L8 3.4 L3.4 8 L1 5.6 Z" fill="#000"/></svg></div>
<span class="t" style="left:449px;top:615.2px;height:15px;line-height:15px;font-size:10.8px;letter-spacing:-0.12px;transform:scaleX(0.9641);transform-origin:0 50%;">Photometry</span>
<div class="gb" style="left:253px;top:645.6px;width:265px;height:69.9px;"></div>
<div class="" style="left:261.1px;top:641.6px;width:66.6px;height:13px;background:#f0f0f0;"></div>
<span class="t" style="left:262.6px;top:640.5px;height:15px;line-height:15px;font-size:10.6px;letter-spacing:0.1px;">Star Tracking</span>
<div class="" style="left:405px;top:640px;width:106.5px;height:13px;background:#f0f0f0;"></div>
<span class="t" style="left:406.4px;top:638.8px;height:15px;line-height:15px;font-size:10.6px;letter-spacing:-0.12px;transform:scaleX(0.9977);transform-origin:0 50%;">Passed Point (Frame.)</span>
<div class="rb" style="left:260.7px;top:656.9px;width:12px;height:12px;"></div>
<span class="t" style="left:278.5px;top:655.9px;height:15px;line-height:15px;font-size:10.8px;letter-spacing:-0.04px;">Anchor</span>
<div class="rb" style="left:260.7px;top:669.9px;width:12px;height:12px;"><i></i></div>
<span class="t" style="left:278.5px;top:668.9px;height:15px;line-height:15px;font-size:10.8px;letter-spacing:0.05px;">Drift</span>
<div class="rb" style="left:260.7px;top:683.5px;width:12px;height:12px;"></div>
<span class="t" style="left:278.5px;top:682.5px;height:15px;line-height:15px;font-size:10.8px;letter-spacing:-0.12px;transform:scaleX(0.9085);transform-origin:0 50%;">OFF</span>
<div class="rb" style="left:260.7px;top:697.1px;width:12px;height:12px;"></div>
<span class="t" style="left:278.5px;top:696.1px;height:15px;line-height:15px;font-size:10.8px;letter-spacing:-0.12px;transform:scaleX(0.9332);transform-origin:0 50%;">CSV</span>
<div class="tb" style="left:324.3px;top:655.3px;width:12px;height:12px;"></div>
<span class="t" style="left:342px;top:654px;height:14px;line-height:14px;font-size:10.5px;font-weight:bold;font-family:'Liberation Serif',serif;letter-spacing:-0.12px;transform:scaleX(0.8955);transform-origin:0 50%;">Estimated track</span>
<span class="t" style="left:320.6px;top:668.4px;height:15px;line-height:15px;font-size:10.8px;letter-spacing:-0.12px;transform:scaleX(0.9873);transform-origin:0 50%;">Radius</span>
<span class="t" style="left:359.2px;top:668.4px;height:15px;line-height:15px;font-size:10.8px;letter-spacing:-0.12px;transform:scaleX(0.9837);transform-origin:0 50%;">Threshold</span>
<div class="tb" style="left:311.2px;top:686.5px;width:20.6px;height:18.2px;"></div>
<span class="t" style="left:314.5px;top:687.6px;height:16px;line-height:16px;font-size:12px;transform:scaleX(0.88);transform-origin:0 50%;">3</span>
<div class="b c" style="left:333.8px;top:685px;width:16.8px;height:10.2px;"><svg width="5" height="3" viewBox="0 0 5 3"><polygon points="0,3 5,3 2.5,0" fill="#000"/></svg></div>
<div class="b c" style="left:333.8px;top:696.8px;width:16.8px;height:11px;"><svg width="5" height="3" viewBox="0 0 5 3"><polygon points="0,0 5,0 2.5,3" fill="#000"/></svg></div>
<div class="tb" style="left:364.1px;top:686.5px;width:23.7px;height:18.2px;"></div>
<span class="t" style="left:366.8px;top:687.6px;height:16px;line-height:16px;font-size:12px;transform:scaleX(0.88);transform-origin:0 50%;">50</span>
<div class="b c" style="left:388.2px;top:689.5px;width:17px;height:9.2px;"><svg width="3" height="2" viewBox="0 0 3 2"><polygon points="0,2 3,2 1.5,0" fill="#000"/></svg></div>
<div class="b c" style="left:388.2px;top:699.4px;width:17px;height:8.9px;"><svg width="3" height="2" viewBox="0 0 3 2"><polygon points="0,0 3,0 1.5,2" fill="#000"/></svg></div>
<div class="tb" style="left:414.2px;top:663.2px;width:44px;height:19.2px;"></div>
<span class="t" style="left:417.3px;top:664.8px;height:16px;line-height:16px;font-size:12px;transform:scaleX(0.88);transform-origin:0 50%;">Frame1</span>
<div class="tb" style="left:466.2px;top:663.2px;width:43.8px;height:19.2px;"></div>
<span class="t" style="left:469.3px;top:664.8px;height:16px;line-height:16px;font-size:12px;transform:scaleX(0.88);transform-origin:0 50%;">Frame2</span>
<div class="b" style="left:414.2px;top:687.4px;width:24px;height:20.9px;"></div>
<span class="t" style="left:416.7px;top:690.15px;height:16px;line-height:16px;font-size:12px;font-weight:bold;letter-spacing:0.16px;">Set</span>
<div class="b" style="left:438.2px;top:687.4px;width:24.5px;height:20.9px;"></div>
<span class="t" style="left:443.7px;top:690.15px;height:16px;line-height:16px;font-size:12px;letter-spacing:-0.12px;transform:scaleX(0.8947);transform-origin:0 50%;">Clr</span>
<div class="b" style="left:464.4px;top:687.4px;width:27.3px;height:20.9px;"></div>
<span class="t" style="left:468.55px;top:690.15px;height:16px;line-height:16px;font-size:12px;font-weight:bold;letter-spacing:0.16px;">Set</span>
<div class="b" style="left:491.7px;top:687.4px;width:23.3px;height:20.9px;"></div>
<span class="t" style="left:496.6px;top:690.15px;height:16px;line-height:16px;font-size:12px;letter-spacing:-0.12px;transform:scaleX(0.8947);transform-origin:0 50%;">Clr</span>
<div class="gb" style="left:521.3px;top:588.2px;width:120.7px;height:128px;"></div>
<div class="" style="left:528.9px;top:584.2px;width:87.7px;height:13px;background:#f0f0f0;"></div>
<span class="t" style="left:530.4px;top:583.1px;height:15px;line-height:15px;font-size:10.6px;letter-spacing:-0.12px;transform:scaleX(0.9853);transform-origin:0 50%;">Form of BKG-Area</span>
<div class="rb" style="left:526.6px;top:599.2px;width:12px;height:12px;"><i></i></div>
<span class="t" style="left:544.4px;top:598.2px;height:15px;line-height:15px;font-size:10.8px;letter-spacing:-0.12px;transform:scaleX(0.9955);transform-origin:0 50%;">Standard</span>
<div class="rb" style="left:526.6px;top:615.5px;width:12px;height:12px;"></div>
<span class="t" style="left:544.4px;top:614.5px;height:15px;line-height:15px;font-size:10.8px;letter-spacing:-0.05px;">Avoid Sunlit Face</span>
<div class="rb" style="left:526.6px;top:631.3px;width:12px;height:12px;"></div>
<span class="t" style="left:544.4px;top:630.3px;height:15px;line-height:15px;font-size:10.8px;letter-spacing:-0.05px;">Meteor/Lunar Limb</span>
<div class="b" style="left:530.4px;top:649.6px;width:104.8px;height:22.8px;"></div>
<span class="t" style="left:543.8px;top:653.8px;height:15px;line-height:15px;font-size:10.8px;letter-spacing:-0.12px;transform:scaleX(1.0088);transform-origin:0 50%;">Direction Setting</span>
<span class="t" style="left:534px;top:674.4px;height:15px;line-height:15px;font-size:10.8px;letter-spacing:0.22px;">Width</span>
<span class="t" style="left:590.3px;top:674.4px;height:15px;line-height:15px;font-size:10.8px;letter-spacing:-0.12px;transform:scaleX(0.9914);transform-origin:0 50%;">Gap</span>
<div class="tb" style="left:540px;top:689.5px;width:24.2px;height:16.5px;"></div>
<span class="t" style="left:543px;top:689.75px;height:16px;line-height:16px;font-size:12px;transform:scaleX(0.88);transform-origin:0 50%;">25</span>
<div class="b c" style="left:565.4px;top:687.4px;width:16.4px;height:11.3px;"><svg width="5" height="3" viewBox="0 0 5 3"><polygon points="0,3 5,3 2.5,0" fill="#000"/></svg></div>
<div class="b c" style="left:565.4px;top:699.8px;width:16.4px;height:11.6px;"><svg width="5" height="3" viewBox="0 0 5 3"><polygon points="0,0 5,0 2.5,3" fill="#000"/></svg></div>
<div class="tb" style="left:590.3px;top:689.5px;width:23.7px;height:16.5px;"></div>
<span class="t" style="left:593.5px;top:689.75px;height:16px;line-height:16px;font-size:12px;transform:scaleX(0.88);transform-origin:0 50%;">0</span>
<div class="b c" style="left:617.1px;top:687.4px;width:16.8px;height:11.3px;"><svg width="5" height="3" viewBox="0 0 5 3"><polygon points="0,3 5,3 2.5,0" fill="#000"/></svg></div>
<div class="b c" style="left:617.1px;top:699.8px;width:16.8px;height:11.6px;"><svg width="5" height="3" viewBox="0 0 5 3"><polygon points="0,0 5,0 2.5,3" fill="#000"/></svg></div>
<div class="gb" style="left:645.5px;top:588.2px;width:136.5px;height:128px;"></div>
<div class="" style="left:653.1px;top:584.2px;width:126px;height:13px;background:#f0f0f0;"></div>
<span class="t" style="left:654.6px;top:583.1px;height:15px;line-height:15px;font-size:10.6px;letter-spacing:0.02px;">Number of Pixels / Radius</span>
<span class="t" style="left:654.6px;top:594.6px;height:15px;line-height:15px;font-size:10.8px;letter-spacing:-0.12px;transform:scaleX(0.9856);transform-origin:0 50%;">Aperture</span>
<span class="t" style="left:718.1px;top:594.6px;height:15px;line-height:15px;font-size:10.8px;letter-spacing:0.16px;">Backgound</span>
<span class="t" style="left:654.6px;top:610.4px;height:15px;line-height:15px;font-size:10.8px;letter-spacing:-0.04px;">Even</span>
<span class="t" style="left:654.6px;top:625.8px;height:15px;line-height:15px;font-size:10.8px;letter-spacing:-0.12px;transform:scaleX(0.9765);transform-origin:0 50%;">Odd</span>
<span class="t" style="left:654.6px;top:641.2px;height:15px;line-height:15px;font-size:10.8px;letter-spacing:-0.12px;transform:scaleX(0.9374);transform-origin:0 50%;">Frame</span>
<div class="tb" style="left:689.5px;top:609.7px;width:36.3px;height:13.7px;"></div>
<div class="tb" style="left:734.1px;top:609.7px;width:36.7px;height:13.7px;"></div>
<div class="tb" style="left:689.5px;top:625.5px;width:36.3px;height:13.9px;"></div>
<div class="tb" style="left:734.1px;top:625.5px;width:36.7px;height:13.9px;"></div>
<div class="tb" style="left:689.5px;top:641.5px;width:36.3px;height:14.2px;"></div>
<div class="tb" style="left:734.1px;top:641.5px;width:36.7px;height:14.2px;"></div>
<div class="b" style="left:654.3px;top:660px;width:120.5px;height:13.3px;"></div>
<span class="t" style="left:661.55px;top:659.45px;height:15px;line-height:15px;font-size:10.6px;color:#a0a0a0;letter-spacing:-0.06px;">Set  radius to recorded</span>
<span class="t" style="left:658.3px;top:674.4px;height:15px;line-height:15px;font-size:10.8px;letter-spacing:-0.12px;transform:scaleX(0.9994);transform-origin:0 50%;">Radius</span>
<span class="t" style="left:706.3px;top:674.4px;height:15px;line-height:15px;font-size:10.8px;letter-spacing:-0.12px;transform:scaleX(0.9778);transform-origin:0 50%;">Inner</span>
<span class="t" style="left:742.6px;top:674.4px;height:15px;line-height:15px;font-size:10.8px;letter-spacing:-0.12px;transform:scaleX(0.9574);transform-origin:0 50%;">Outer</span>
<div class="tb" style="left:654.6px;top:689.5px;width:17.9px;height:17.7px;"></div>
<span class="t" style="left:657.8px;top:690.35px;height:16px;line-height:16px;font-size:12px;transform:scaleX(0.88);transform-origin:0 50%;">5</span>
<div class="b c" style="left:676px;top:687.4px;width:16.8px;height:11.3px;"><svg width="5" height="3" viewBox="0 0 5 3"><polygon points="0,3 5,3 2.5,0" fill="#000"/></svg></div>
<div class="b c" style="left:676px;top:699.8px;width:16.8px;height:11.6px;"><svg width="5" height="3" viewBox="0 0 5 3"><polygon points="0,0 5,0 2.5,3" fill="#000"/></svg></div>
<div class="tb" style="left:698.2px;top:689.5px;width:18.2px;height:17.7px;"></div>
<span class="t" style="left:701.4px;top:690.35px;height:16px;line-height:16px;font-size:12px;transform:scaleX(0.88);transform-origin:0 50%;">6</span>
<div class="b c" style="left:719px;top:687.4px;width:16.4px;height:11.3px;"><svg width="5" height="3" viewBox="0 0 5 3"><polygon points="0,3 5,3 2.5,0" fill="#000"/></svg></div>
<div class="b c" style="left:719px;top:699.8px;width:16.4px;height:11.6px;"><svg width="5" height="3" viewBox="0 0 5 3"><polygon points="0,0 5,0 2.5,3" fill="#000"/></svg></div>
<div class="tb" style="left:741.7px;top:689.5px;width:19.1px;height:17.7px;"></div>
<span class="t" style="left:744px;top:690.35px;height:16px;line-height:16px;font-size:12px;transform:scaleX(0.88);transform-origin:0 50%;">20</span>
<div class="b c" style="left:763.1px;top:687.4px;width:15.9px;height:11.3px;"><svg width="5" height="3" viewBox="0 0 5 3"><polygon points="0,3 5,3 2.5,0" fill="#000"/></svg></div>
<div class="b c" style="left:763.1px;top:699.8px;width:15.9px;height:11.6px;"><svg width="5" height="3" viewBox="0 0 5 3"><polygon points="0,0 5,0 2.5,3" fill="#000"/></svg></div>
<div class="b" style="left:790.4px;top:588px;width:112.2px;height:23.2px;"></div>
<span class="t" style="left:809.35px;top:592.4px;height:15px;line-height:15px;font-size:10.8px;letter-spacing:-0.12px;transform:scaleX(1.0047);transform-origin:0 50%;">Star Image [3D]</span>
<div class="b" style="left:906.5px;top:588px;width:108.3px;height:23.2px;"></div>
<span class="t" style="left:911px;top:592.4px;height:15px;line-height:15px;font-size:10.8px;letter-spacing:-0.12px;transform:scaleX(1.0074);transform-origin:0 50%;">Update Setting Items</span>
<div class="gb" style="left:789.4px;top:616.9px;width:160.2px;height:50.3px;"></div>
<div class="" style="left:797.1px;top:612.9px;width:134.4px;height:13px;background:#f0f0f0;"></div>
<span class="t" style="left:798.6px;top:611.8px;height:15px;line-height:15px;font-size:10.6px;letter-spacing:0.03px;">Measurement / View Option</span>
<div class="b" style="left:798.6px;top:624.8px;width:72.2px;height:18.2px;"></div>
<span class="t" style="left:808.7px;top:626.7px;height:15px;line-height:15px;font-size:10.8px;letter-spacing:-0.12px;transform:scaleX(0.9934);transform-origin:0 50%;">Show Field</span>
<div class="tb" style="left:798.5px;top:647.2px;width:12px;height:12px;background:#f0f0f0;"></div>
<span class="t" style="left:816.7px;top:646px;height:15px;line-height:15px;font-size:10.8px;color:#a0a0a0;letter-spacing:-0.12px;transform:scaleX(0.9793);transform-origin:0 50%;">Field Measure</span>
<span class="t" style="left:906.5px;top:625.5px;height:15px;line-height:15px;font-size:10.8px;letter-spacing:-0.06px;">Interval</span>
<div class="b c" style="left:890.5px;top:637px;width:14.8px;height:11.8px;"><svg width="5" height="3" viewBox="0 0 5 3"><polygon points="0,3 5,3 2.5,0" fill="#000"/></svg></div>
<div class="b c" style="left:890.5px;top:650.4px;width:14.8px;height:13.8px;"><svg width="5" height="3" viewBox="0 0 5 3"><polygon points="0,0 5,0 2.5,3" fill="#000"/></svg></div>
<div class="tb" style="left:906.5px;top:642.4px;width:35.5px;height:19.5px;"></div>
<span class="t" style="left:909.8px;top:644.15px;height:16px;line-height:16px;font-size:12px;transform:scaleX(0.88);transform-origin:0 50%;">1</span>
<div class="pb" style="left:958px;top:617.5px;width:56.2px;height:18.7px;"></div>
<span class="t" style="left:969.6px;top:619.95px;height:15px;line-height:15px;font-size:10.8px;letter-spacing:0.05px;">DShow</span>
<span class="t" style="left:956.9px;top:634.3px;height:15px;line-height:15px;font-size:10.8px;letter-spacing:-0.12px;transform:scaleX(0.9725);transform-origin:0 50%;">Frame Rate</span>
<div class="tb" style="left:956.3px;top:647.8px;width:57.9px;height:18.9px;"></div>
<span class="t" style="left:962.5px;top:649.25px;height:16px;line-height:16px;font-size:12px;transform:scaleX(0.88);transform-origin:0 50%;width:55.5px;overflow:hidden;">2.9586329</span>
<div class="gb" style="left:789.4px;top:674.9px;width:82.6px;height:40.2px;"></div>
<div class="" style="left:797.1px;top:670.9px;width:53.7px;height:13px;background:#f0f0f0;"></div>
<span class="t" style="left:798.6px;top:669.8px;height:15px;line-height:15px;font-size:10.6px;letter-spacing:-0.12px;transform:scaleX(0.9785);transform-origin:0 50%;">Field Order</span>
<div class="rb" style="left:798.6px;top:684px;width:12px;height:12px;"></div>
<span class="t" style="left:816.7px;top:683px;height:15px;line-height:15px;font-size:10.8px;letter-spacing:-0.12px;transform:scaleX(0.9901);transform-origin:0 50%;">Even first</span>
<div class="rb" style="left:798.6px;top:698px;width:12px;height:12px;"><i></i></div>
<span class="t" style="left:816.7px;top:697px;height:15px;line-height:15px;font-size:10.8px;letter-spacing:-0.12px;transform:scaleX(0.9786);transform-origin:0 50%;">Odd first</span>
<div class="gb" style="left:923px;top:674.9px;width:91.2px;height:40.2px;"></div>
<div class="" style="left:930.9px;top:670.9px;width:71px;height:13px;background:#f0f0f0;"></div>
<span class="t" style="left:932.4px;top:669.8px;height:15px;line-height:15px;font-size:10.6px;letter-spacing:-0.07px;">Current Object</span>
<div class="b" style="left:870.2px;top:675.9px;width:54.5px;height:39.1px;"></div>
<span class="t" style="left:880.45px;top:687.75px;height:16px;line-height:16px;font-size:12.5px;font-weight:bold;letter-spacing:-0.12px;transform:scaleX(0.9359);transform-origin:0 50%;">Graph</span>
<div class="pb" style="left:928.2px;top:685.3px;width:25px;height:20.7px;"></div>
<span class="t" style="left:937.7px;top:688.25px;height:16px;line-height:16px;font-size:12px;">A</span>
<div class="b" style="left:956.3px;top:685.3px;width:25.9px;height:20.7px;"></div>
<span class="t" style="left:965.25px;top:687.95px;height:16px;line-height:16px;font-size:12px;">B</span>
<div class="b" style="left:984.4px;top:685.3px;width:26.1px;height:20.7px;"></div>
<span class="t" style="left:993.12px;top:687.95px;height:16px;line-height:16px;font-size:12px;">C</span>
<div class="" style="left:928.2px;top:707.2px;width:27px;height:3.6px;background:#a6caf0;"></div>
<div class="" style="left:956.3px;top:707.2px;width:27px;height:3.6px;background:#ffff00;"></div>
<div class="" style="left:984.4px;top:707.2px;width:27px;height:3.6px;background:#ff00ff;"></div>
<span class="t" style="left:134.7px;top:736.2px;height:16px;line-height:16px;font-size:12px;font-weight:bold;letter-spacing:-0.12px;transform:scaleX(0.9848);transform-origin:0 50%;">Timing process indicator</span>
<div class="tb1" style="left:14.5px;top:753.5px;width:78.9px;height:19.5px;background:#00ffff;"></div>
<span class="t" style="left:17.5px;top:755.25px;height:16px;line-height:16px;font-size:12px;letter-spacing:-0.12px;transform:scaleX(0.9141);transform-origin:0 50%;">1. Time correct</span>
<div class="tb1" style="left:95px;top:753.5px;width:86.2px;height:19.5px;background:#00ffff;"></div>
<span class="t" style="left:98px;top:755.25px;height:16px;line-height:16px;font-size:12px;letter-spacing:-0.12px;transform:scaleX(0.902);transform-origin:0 50%;">2. XML element</span>
<div class="tb1" style="left:183px;top:753.5px;width:70.6px;height:19.5px;background:#00ffff;"></div>
<span class="t" style="left:186px;top:755.25px;height:16px;line-height:16px;font-size:12px;letter-spacing:-0.12px;transform:scaleX(0.9151);transform-origin:0 50%;">3. Light curve</span>
<div class="tb1" style="left:254.3px;top:753.5px;width:79.5px;height:19.5px;background:#fff;"></div>
<span class="t" style="left:257.3px;top:755.25px;height:16px;line-height:16px;font-size:12px;letter-spacing:-0.12px;transform:scaleX(0.9129);transform-origin:0 50%;">4. Diffraction tit</span>
<div class="tb1" style="left:335.2px;top:753.5px;width:78.6px;height:19.5px;background:#fff;"></div>
<span class="t" style="left:338.2px;top:755.25px;height:16px;line-height:16px;font-size:12px;letter-spacing:-0.12px;transform:scaleX(0.9102);transform-origin:0 50%;">5. Make report</span>
<span class="t" style="left:429.6px;top:724.2px;height:18px;line-height:18px;font-size:14px;font-weight:bold;letter-spacing:0.15px;">AVI filename :</span>
<div class="tb" style="left:526.5px;top:723.5px;width:495.3px;height:17.5px;"></div>
<div class="tb" style="left:646.3px;top:749.5px;width:103.7px;height:19.1px;"></div>
<span class="t" style="left:649.3px;top:751.05px;height:16px;line-height:16px;font-size:12px;font-weight:bold;letter-spacing:0.56px;">4. 1. 11251. 0</span>
<span class="t" style="left:526.7px;top:751.3px;height:18px;line-height:18px;font-size:14px;letter-spacing:-0.05px;transform:scaleX(0.9535);transform-origin:0 50%;">SharpCap version:</span>
<span class="t" style="left:765.8px;top:751.8px;height:18px;line-height:18px;font-size:14px;letter-spacing:-0.05px;transform:scaleX(0.9763);transform-origin:0 50%;">Time stamp indicates</span>
<div class="tb" style="left:902.6px;top:749.5px;width:111.6px;height:19.1px;"></div>
<span class="t" style="left:905.4px;top:751.05px;height:16px;line-height:16px;font-size:12px;font-weight:bold;letter-spacing:-0.12px;transform:scaleX(0.9682);transform-origin:0 50%;">FrameEnd</span>
<span class="t" style="left:529.3px;top:724.6px;height:16px;line-height:16px;font-size:12px;font-family:'Liberation Mono',monospace;transform:scaleX(0.8333);transform-origin:0 50%;">I:¥A-</span>
<svg width="12" height="12" viewBox="0 0 12 12" style="left:559.3px;top:726.3px"><path d="M4 1.5L7.5 2.5M2 4.5H9L3 10.5L5.5 8H7V10.5H10.5" fill="none" stroke="#000" stroke-width="1"/></svg>
<svg width="12" height="12" viewBox="0 0 12 12" style="left:571.3px;top:726.3px"><path d="M6.5 1L2 10.5L4.5 6.5L6.5 6.5L7 10.5H9L10.5 8" fill="none" stroke="#000" stroke-width="1"/></svg>
<svg width="12" height="12" viewBox="0 0 12 12" style="left:583.3px;top:726.3px"><path d="M1 7.5L4 3.5L10.5 9.5M8.5 2.5a1.2 1.2 0 1 0 2.4 0a1.2 1.2 0 1 0 -2.4 0" fill="none" stroke="#000" stroke-width="1"/></svg>
<svg width="12" height="12" viewBox="0 0 12 12" style="left:595.3px;top:726.3px"><path d="M2.5 2V8.5L4 10.5L5 8.5M8.5 3L10.5 7.5" fill="none" stroke="#000" stroke-width="1"/></svg>
<svg width="12" height="12" viewBox="0 0 12 12" style="left:607.3px;top:726.3px"><path d="M0 1.5H5.5M0 3.5H5.5M0.5 5.5H5.5M0.5 7.5H5.5M0.5 9.5H5.5M1.5 0V2.5M4 0V2.5M1 4V11M3.5 5.5V10M6.5 1.5H11V7H6.5ZM6.5 3.5H11M6.5 5.5H11M7.5 7L6 11M9.5 7V10.5H11.5" fill="none" stroke="#000" stroke-width="1"/></svg>
<svg width="12" height="12" viewBox="0 0 12 12" style="left:619.3px;top:726.3px"><path d="M0 1.5L1.5 2.5M0 4.5L1.5 5.5M0 11L2 8M3.5 1.5H7.5V8.5H3.5ZM3.5 4H7.5M3.5 6H7.5M4.5 9L3 11M6.5 9L8 11M9.5 2V8.5M11.5 0V11L10.5 10.5" fill="none" stroke="#000" stroke-width="1"/></svg>
<span class="t" style="left:631.3px;top:724.6px;height:16px;line-height:16px;font-size:12px;font-family:'Liberation Mono',monospace;transform:scaleX(0.8333);transform-origin:0 50%;">¥</span>
<svg width="12" height="12" viewBox="0 0 12 12" style="left:637.3px;top:726.3px"><path d="M0 1.5H5.5M0 3.5H5.5M0.5 5.5H5.5M0.5 7.5H5.5M0.5 9.5H5.5M1.5 0V2.5M4 0V2.5M1 4V11M3.5 5.5V10M6.5 1.5H11V7H6.5ZM6.5 3.5H11M6.5 5.5H11M7.5 7L6 11M9.5 7V10.5H11.5" fill="none" stroke="#000" stroke-width="1"/></svg>
<svg width="12" height="12" viewBox="0 0 12 12" style="left:649.3px;top:726.3px"><path d="M0 1.5L1.5 2.5M0 4.5L1.5 5.5M0 11L2 8M3.5 1.5H7.5V8.5H3.5ZM3.5 4H7.5M3.5 6H7.5M4.5 9L3 11M6.5 9L8 11M9.5 2V8.5M11.5 0V11L10.5 10.5" fill="none" stroke="#000" stroke-width="1"/></svg>
<svg width="12" height="12" viewBox="0 0 12 12" style="left:661.3px;top:726.3px"><path d="M1 1.5H4.5M0 3.5H5.5M1 5.5H4.5M1 7.5H4.5M1 9H4.5V11.5H1ZM6.5 1.5H11.5V5.5H6.5V10.5H11.5V8.5" fill="none" stroke="#000" stroke-width="1"/></svg>
<svg width="12" height="12" viewBox="0 0 12 12" style="left:673.3px;top:726.3px"><path d="M3 0L0 3.5M3 0L6 3M1 4.5H5M0.5 6.5H5.5M3 4.5V10.5M1 8L1.5 9.5M5 8L4.5 9.5M0 10.5H6M7 1.5H11V4.5H7M7 3H11M6 6.5H12M9 4.5V11L8 10.5M7 8L8 9M11.5 7.5L10 9M9 8L6.5 11M9 8L12 11" fill="none" stroke="#000" stroke-width="1"/></svg>
<span class="t" style="left:685.3px;top:724.6px;height:16px;line-height:16px;font-size:12px;font-family:'Liberation Mono',monospace;transform:scaleX(0.8333);transform-origin:0 50%;">2026¥</span>
<span class="t" style="left:715.3px;top:724.6px;height:16px;line-height:16px;font-size:12px;font-family:'Liberation Mono',monospace;transform:scaleX(0.8333);transform-origin:0 50%;">20260116</span>
<svg width="12" height="12" viewBox="0 0 12 12" style="left:763.3px;top:726.3px"><path d="M6 1a5 5 0 1 0 0.01 0ZM6 3.5a2.5 2.5 0 1 0 0.01 0Z" fill="none" stroke="#000" stroke-width="1"/></svg>
<span class="t" style="left:775.3px;top:724.6px;height:16px;line-height:16px;font-size:12px;font-family:'Liberation Mono',monospace;transform:scaleX(0.8333);transform-origin:0 50%;">Luznice</span>
<svg width="12" height="12" viewBox="0 0 12 12" style="left:817.3px;top:726.3px"><path d="M0 3.5H5.5M2.5 0V11.5M2.5 4L0 8.5M2.5 4L5 7.5M8 0L6 5.5M9.5 0L12 5.5M7 6.5H11V11L10 10.5M8.5 6.5L6 11.5" fill="none" stroke="#000" stroke-width="1"/></svg>
<svg width="12" height="12" viewBox="0 0 12 12" style="left:829.3px;top:726.3px"><path d="M0 1.5H5.5M1 3.5H5V6.5H1ZM1 6.5L0 11.5M11.5 0.5L7.5 2V7L6.5 11.5M7.5 5.5H12M10 5.5V11.5" fill="none" stroke="#000" stroke-width="1"/></svg>
<span class="t" style="left:841.3px;top:724.6px;height:16px;line-height:16px;font-size:12px;font-family:'Liberation Mono',monospace;transform:scaleX(0.8333);transform-origin:0 50%;">¥20_09_31.avi</span>
<div class="" style="left:1034px;top:5px;width:754px;height:711.5px;background:#f0f0f0;border-radius:8px;overflow:hidden;box-shadow:0 0 0 1px rgba(30,36,46,.75),0 10px 30px 4px rgba(0,0,0,.32);"><div style="left:0;top:0;width:754px;height:27px;background:#f3f3f3"></div></div>
<svg width="16" height="16" viewBox="0 0 16 16" style="left:1037px;top:9px"><path d="M0 0H6.5L7.5 1.2H9L9.6 0H14L16 1.5V16H15L14.5 14.8H9L8.5 15.8H3.5L0 13.5Z" fill="#0000d0"/><path d="M7 1.5H16V7.5H8ZM7.5 9.5H13V13H9Z" fill="#000090"/><path d="M0 12L4 15.8H9L8.6 14.6L0.5 12.5Z" fill="#000030"/><rect x="0" y="7.8" width="16" height="1.3" fill="#fff000"/><path d="M5.4 0L6.2 5.4Q6.6 7.6 9.6 8.4Q6.6 9.2 6.2 11.4L5.4 16L4.6 11.4Q4.2 9.2 1.2 8.4Q4.2 7.6 4.6 5.4Z" fill="#ffff00"/><g fill="#fff"><rect x="10" y="1" width="1.1" height="1.1"/><rect x="12" y="1" width="1.1" height="1.1"/><rect x="14" y="2" width="1.1" height="1.1"/><rect x="3.2" y="3.2" width="1" height="1"/><rect x="10" y="13" width="1.1" height="1.1"/><rect x="12" y="12.4" width="1" height="1.4"/><rect x="14" y="13" width="1.1" height="1.1"/><rect x="8" y="13.3" width=".8" height="1.2" opacity=".6"/></g></svg>
<span class="t" style="left:1059px;top:9.8px;height:15px;line-height:15px;font-size:11.2px;letter-spacing:0.22px;">Graph</span>
<svg width="110" height="14" viewBox="0 0 110 14" style="left:1665px;top:10px" fill="none" stroke="#000" stroke-width="1"><path d="M4 7.5h10"/><rect x="49.5" y="2.5" width="9.5" height="9.5" rx="1.2"/><path d="M95 2.3l10 10M105 2.3l-10 10"/></svg>
<div class="" style="left:1042px;top:32px;width:740.3px;height:425px;background:#fff;"></div>
<span class="t" style="left:1050.7px;top:34.3px;height:16px;line-height:16px;font-size:11.5px;font-weight:bold;letter-spacing:0.7px;">2026 Jan 16; (2321) Luznice occults UCAC4 614-030010 Observed by Toshihiro Horikawa</span>
<span class="t" style="left:1597px;top:34.3px;height:16px;line-height:16px;font-size:11.5px;letter-spacing:0.27px;">/ PSF-Frame Photometry /</span>
<svg width="740.3" height="425" viewBox="0 0 740.3 425" style="left:1042px;top:32px" shape-rendering="crispEdges"><defs><marker id="mo" markerWidth="5" markerHeight="5" refX="2.5" refY="2.5" markerUnits="userSpaceOnUse"><circle cx="2.5" cy="2.5" r="2.1" fill="#ffa000" shape-rendering="geometricPrecision"/></marker><marker id="mb" markerWidth="5" markerHeight="5" refX="2.5" refY="2.5" markerUnits="userSpaceOnUse"><circle cx="2.5" cy="2.5" r="2.1" fill="#0000ff" shape-rendering="geometricPrecision"/></marker><marker id="mm" markerWidth="5" markerHeight="5" refX="2.5" refY="2.5" markerUnits="userSpaceOnUse"><circle cx="2.5" cy="2.5" r="2.1" fill="#ff00ff" shape-rendering="geometricPrecision"/></marker></defs><rect x="50.6" y="310" width="679.6" height="1" fill="#00ffff"/><rect x="50.6" y="246" width="679.6" height="1" fill="#00ffff"/><rect x="50.6" y="182" width="679.6" height="1" fill="#00ffff"/><rect x="50.6" y="117" width="679.6" height="1" fill="#00ffff"/><rect x="50.6" y="53" width="679.6" height="1" fill="#00ffff"/><rect x="50.6" y="375" width="679.6" height="1" fill="#000"/><polyline points="50.6,56.5 52.5,27.5 54.4,46.8 56.3,66.8 58.2,61.8 60.1,46.1 62.0,64.4 64.0,59.5 65.9,42.6 67.8,43.0 69.7,28.8 71.6,60.6 73.5,71.9 75.4,61.9 77.3,49.4 79.2,59.1 81.1,29.5 83.0,60.6 84.9,68.7 86.9,59.9 88.8,62.7 90.7,72.5 92.6,64.5 94.5,60.2 96.4,88.7 98.3,29.5 100.2,70.2 102.1,66.4 104.0,47.7 105.9,90.6 107.8,66.2 109.7,63.1 111.7,101.8 113.6,52.5 115.5,96.3 117.4,84.7 119.3,69.0 121.2,50.3 123.1,79.6 125.0,102.8 126.9,67.0 128.8,83.3 130.7,63.1 132.6,80.3 134.6,64.6 136.5,92.7 138.4,32.0 140.3,50.6 142.2,77.0 144.1,62.0 146.0,69.5 147.9,75.7 149.8,65.0 151.7,62.2 153.6,82.3 155.5,75.0 157.4,75.0 159.4,67.6 161.3,74.3 163.2,79.4 165.1,73.9 167.0,65.3 168.9,101.3 170.8,89.4 172.7,51.7 174.6,68.9 176.5,89.2 178.4,45.6 180.3,57.9 182.3,76.8 184.2,43.4 186.1,42.8 188.0,53.2 189.9,32.5 191.8,66.9 193.7,79.9 195.6,48.9 197.5,52.4 199.4,113.0 201.3,79.1 203.2,49.1 205.1,44.2 207.1,76.9 209.0,32.0 210.9,54.8 212.8,56.0 214.7,67.0 216.6,55.4 218.5,79.7 220.4,74.6 222.3,37.9 224.2,43.0 226.1,80.0 228.0,37.1 230.0,36.6 231.9,58.8 233.8,52.1 235.7,38.1 237.6,50.7 239.5,61.9 241.4,46.6 243.3,62.4 245.2,26.3 247.1,54.1 249.0,36.9 250.9,61.2 252.8,71.0 254.8,40.1 256.7,50.9 258.6,51.9 260.5,38.5 262.4,59.8 264.3,54.9 266.2,52.8 268.1,75.7 270.0,72.7 271.9,47.0 273.8,77.6 275.7,93.3 277.7,65.3 279.6,82.3 281.5,84.3 283.4,62.2 285.3,111.9 287.2,72.2 289.1,74.5 291.0,75.0 292.9,89.4 294.8,51.1 296.7,43.2 298.6,65.3 300.5,78.9 302.5,88.6 304.4,85.8 306.3,68.9 308.2,75.2 310.1,93.8 312.0,74.7 313.9,70.4 315.8,97.0 317.7,86.1 319.6,97.2 321.5,71.6 323.4,77.5 325.4,84.8 327.3,82.6 329.2,84.3 331.1,68.1 333.0,95.2 334.9,41.2 336.8,74.6 338.7,100.2 340.6,51.2 342.5,54.9 344.4,57.9 346.3,61.4 348.2,51.7 350.2,45.9 352.1,46.0 354.0,61.9 355.9,25.0 357.8,48.8 359.7,34.5 361.6,36.9 363.5,46.8 365.4,66.6 367.3,53.8 369.2,47.6 371.1,44.5 373.1,47.1 375.0,47.0 376.9,31.5 378.8,83.6 380.7,60.7 382.6,23.7 384.5,42.3 386.4,78.7 388.3,62.8 390.2,73.6 392.1,45.1 394.0,55.6 395.9,67.9 397.9,81.7 399.8,64.4 401.7,58.5 403.6,71.4 405.5,65.2 407.4,60.3 409.3,80.9 411.2,92.7 413.1,82.3 415.0,37.5 416.9,64.7 418.8,65.7 420.8,110.0 422.7,62.0 424.6,75.0 426.5,34.2 428.4,24.3 430.3,47.0 432.2,55.1 434.1,60.0 436.0,55.5 437.9,65.3 439.8,44.0 441.7,67.3 443.6,51.6 445.6,46.2 447.5,51.3 449.4,51.5 451.3,58.5 453.2,57.9 455.1,34.6 457.0,50.8 458.9,43.2 460.8,72.6 462.7,132.5 464.6,75.8 466.5,76.3 468.5,41.0 470.4,28.8 472.3,49.1 474.2,40.9 476.1,63.5 478.0,68.1 479.9,56.0 481.8,38.2 483.7,65.0 485.6,90.2 487.5,58.9 489.4,96.1 491.3,65.5 493.3,67.8 495.2,54.4 497.1,80.9 499.0,95.5 500.9,95.3 502.8,81.9 504.7,47.0 506.6,101.5 508.5,69.3 510.4,69.8 512.3,102.6 514.2,83.3 516.2,57.6 518.1,76.7 520.0,84.9 521.9,56.6 523.8,56.6 525.7,70.8 527.6,27.5 529.5,46.4 531.4,33.2 533.3,39.3 535.2,57.6 537.1,25.6 539.0,61.9 541.0,42.7 542.9,72.3 544.8,75.6 546.7,50.3 548.6,40.9 550.5,25.4 552.4,62.8 554.3,39.9 556.2,24.3 558.1,30.7 560.0,45.4 561.9,44.1 563.9,27.6 565.8,49.8 567.7,42.3 569.6,46.5 571.5,62.9 573.4,53.4 575.3,102.6 577.2,79.9 579.1,64.3 581.0,49.9 582.9,69.5 584.8,38.9 586.7,39.3 588.7,62.6 590.6,45.3 592.5,55.4 594.4,43.8 596.3,68.7 598.2,78.1 600.1,79.6 602.0,85.2 603.9,54.6 605.8,84.0 607.7,42.6 609.6,64.5 611.6,88.3 613.5,69.7 615.4,37.6 617.3,97.1 619.2,56.2 621.1,70.7 623.0,90.1 624.9,94.5 626.8,71.0 628.7,100.6 630.6,70.3 632.5,54.4 634.4,84.9 636.4,24.3 638.3,57.0 640.2,62.5 642.1,90.5 644.0,95.4 645.9,70.7 647.8,50.2 649.7,74.5 651.6,85.1 653.5,65.1 655.4,74.6 657.3,92.3 659.3,110.5 661.2,87.3 663.1,65.8 665.0,85.5 666.9,84.8 668.8,59.8 670.7,67.5 672.6,84.1 674.5,77.7 676.4,73.8 678.3,47.1 680.2,39.5 682.1,33.9 684.1,72.8 686.0,33.1 687.9,84.2 689.8,64.2 691.7,45.1 693.6,56.0 695.5,49.3 697.4,20.3 699.3,24.3 701.2,60.7 703.1,36.7 705.0,51.9 707.0,71.5 708.9,53.8 710.8,43.2 712.7,76.3 714.6,45.9 716.5,68.9 718.4,50.6 720.3,54.5 722.2,32.7 724.1,54.6 726.0,74.2 727.9,89.8" fill="none" stroke="#ffff00" stroke-width="1" stroke-linejoin="round" marker-start="url(#mo)" marker-mid="url(#mo)" marker-end="url(#mo)"/><polyline points="50.6,238.8 52.5,288.4 54.4,229.2 56.3,218.2 58.2,238.1 60.1,256.0 62.0,280.9 64.0,271.4 65.9,292.6 67.8,288.5 69.7,239.2 71.6,258.9 73.5,257.8 75.4,302.5 77.3,240.6 79.2,241.4 81.1,265.4 83.0,267.5 84.9,231.5 86.9,238.4 88.8,267.2 90.7,276.9 92.6,247.8 94.5,245.9 96.4,260.6 98.3,219.5 100.2,258.9 102.1,273.2 104.0,252.3 105.9,270.2 107.8,220.6 109.7,263.6 111.7,252.7 113.6,252.0 115.5,275.1 117.4,237.9 119.3,310.9 121.2,314.1 123.1,277.5 125.0,265.5 126.9,255.7 128.8,256.6 130.7,289.0 132.6,220.3 134.6,251.1 136.5,284.5 138.4,219.3 140.3,263.7 142.2,244.6 144.1,250.2 146.0,239.3 147.9,245.4 149.8,251.0 151.7,281.1 153.6,251.8 155.5,266.1 157.4,259.9 159.4,245.0 161.3,254.4 163.2,247.4 165.1,262.5 167.0,266.5 168.9,279.4 170.8,304.7 172.7,283.8 174.6,257.3 176.5,225.1 178.4,275.2 180.3,258.3 182.3,267.1 184.2,248.3 186.1,219.9 188.0,229.5 189.9,263.9 191.8,265.6 193.7,252.0 195.6,268.2 197.5,270.1 199.4,278.8 201.3,250.2 203.2,275.9 205.1,225.6 207.1,265.0 209.0,265.8 210.9,253.0 212.8,256.7 214.7,245.5 216.6,292.0 218.5,261.0 220.4,257.6 222.3,284.5 224.2,270.6 226.1,249.0 228.0,213.0 230.0,207.9 231.9,269.3 233.8,278.0 235.7,249.4 237.6,281.9 239.5,257.8 241.4,236.9 243.3,262.2 245.2,240.7 247.1,230.9 249.0,274.9 250.9,272.7 252.8,270.5 254.8,265.5 256.7,255.3 258.6,282.4 260.5,251.9 262.4,270.2 264.3,237.0 266.2,256.4 268.1,233.7 270.0,246.1 271.9,291.3 273.8,251.6 275.7,269.0 277.7,236.8 279.6,320.6 281.5,214.9 283.4,264.3 285.3,251.8 287.2,243.0 289.1,264.5 291.0,248.1 292.9,270.9 294.8,254.4 296.7,258.9 298.6,267.2 300.5,265.1 302.5,259.1 304.4,259.6 306.3,261.7 308.2,263.5 310.1,263.3 312.0,253.5 313.9,264.8 315.8,248.4 317.7,266.7 319.6,236.3 321.5,271.5 323.4,280.0 325.4,294.8 327.3,261.9 329.2,265.6 331.1,250.2 333.0,263.6 334.9,273.4 336.8,312.2 338.7,264.1 340.6,237.9 342.5,254.6 344.4,234.1 346.3,261.9 348.2,247.7 350.2,273.3 352.1,262.3 354.0,261.2 355.9,253.4 357.8,247.2 359.7,270.6 361.6,246.0 363.5,283.2 365.4,266.4 367.3,255.2 369.2,240.4 371.1,246.1 373.1,254.6 375.0,287.6 376.9,227.2 378.8,248.4 380.7,237.2 382.6,229.6 384.5,254.0 386.4,252.0 388.3,345.5 390.2,369.6 392.1,350.5 394.0,345.8 395.9,225.9 397.9,267.0 399.8,240.3 401.7,266.7 403.6,222.1 405.5,253.7 407.4,280.5 409.3,250.2 411.2,276.5 413.1,286.4 415.0,277.3 416.9,243.3 418.8,198.3 420.8,241.3 422.7,250.3 424.6,246.2 426.5,232.1 428.4,265.5 430.3,238.9 432.2,253.2 434.1,288.4 436.0,236.3 437.9,277.6 439.8,291.6 441.7,257.7 443.6,215.6 445.6,222.0 447.5,239.4 449.4,288.5 451.3,253.9 453.2,263.9 455.1,259.9 457.0,258.2 458.9,238.7 460.8,252.4 462.7,274.2 464.6,221.4 466.5,263.8 468.5,265.1 470.4,279.1 472.3,262.6 474.2,296.1 476.1,224.6 478.0,232.5 479.9,243.5 481.8,259.1 483.7,282.1 485.6,283.4 487.5,242.7 489.4,255.3 491.3,237.5 493.3,271.8 495.2,222.7 497.1,218.2 499.0,259.0 500.9,311.5 502.8,253.3 504.7,265.0 506.6,309.6 508.5,252.9 510.4,271.0 512.3,281.7 514.2,239.7 516.2,235.4 518.1,265.3 520.0,311.5 521.9,226.5 523.8,251.3 525.7,227.4 527.6,257.4 529.5,243.9 531.4,263.7 533.3,239.5 535.2,242.4 537.1,288.9 539.0,273.6 541.0,241.8 542.9,255.9 544.8,268.7 546.7,263.4 548.6,236.8 550.5,282.4 552.4,254.3 554.3,269.7 556.2,266.7 558.1,253.9 560.0,261.2 561.9,269.4 563.9,218.2 565.8,247.4 567.7,249.9 569.6,233.6 571.5,234.3 573.4,266.2 575.3,237.4 577.2,238.4 579.1,305.7 581.0,266.7 582.9,271.4 584.8,272.0 586.7,242.3 588.7,265.5 590.6,252.8 592.5,272.2 594.4,275.9 596.3,221.3 598.2,240.2 600.1,257.5 602.0,274.9 603.9,226.9 605.8,216.9 607.7,257.2 609.6,253.1 611.6,289.3 613.5,258.4 615.4,233.2 617.3,240.8 619.2,294.6 621.1,232.3 623.0,282.8 624.9,258.7 626.8,260.0 628.7,222.7 630.6,232.7 632.5,255.8 634.4,249.0 636.4,284.5 638.3,275.2 640.2,223.9 642.1,256.9 644.0,295.4 645.9,254.5 647.8,274.1 649.7,294.3 651.6,281.7 653.5,259.1 655.4,241.5 657.3,246.5 659.3,286.3 661.2,275.8 663.1,273.2 665.0,222.5 666.9,277.8 668.8,269.5 670.7,246.8 672.6,226.8 674.5,242.6 676.4,240.3 678.3,225.8 680.2,282.4 682.1,243.8 684.1,260.6 686.0,237.6 687.9,268.8 689.8,234.4 691.7,219.6 693.6,272.7 695.5,265.1 697.4,245.1 699.3,301.9 701.2,270.5 703.1,227.4 705.0,270.7 707.0,224.0 708.9,259.3 710.8,236.9 712.7,297.1 714.6,296.7 716.5,237.0 718.4,229.9 720.3,283.7 722.2,205.9 724.1,265.8 726.0,288.4 727.9,305.4" fill="none" stroke="#8080ff" stroke-width="1" stroke-linejoin="round" marker-start="url(#mb)" marker-mid="url(#mb)" marker-end="url(#mb)"/><polyline points="50.6,369.5 52.5,371.5 54.4,366.9 56.3,367.5 58.2,368.0 60.1,368.1 62.0,372.6 64.0,374.5 65.9,379.2 67.8,363.1 69.7,369.7 71.6,368.2 73.5,368.0 75.4,380.8 77.3,360.7 79.2,368.7 81.1,371.5 83.0,369.7 84.9,372.0 86.9,379.2 88.8,360.5 90.7,368.6 92.6,371.6 94.5,374.4 96.4,372.1 98.3,374.2 100.2,378.1 102.1,379.2 104.0,373.9 105.9,368.0 107.8,371.8 109.7,367.3 111.7,369.1 113.6,377.1 115.5,370.5 117.4,365.7 119.3,375.9 121.2,359.8 123.1,375.2 125.0,372.7 126.9,373.9 128.8,374.6 130.7,377.5 132.6,365.7 134.6,375.8 136.5,370.9 138.4,371.7 140.3,372.5 142.2,365.8 144.1,371.2 146.0,367.3 147.9,376.2 149.8,364.1 151.7,371.3 153.6,360.5 155.5,365.4 157.4,370.0 159.4,371.5 161.3,377.6 163.2,367.9 165.1,370.0 167.0,364.9 168.9,367.6 170.8,366.4 172.7,367.6 174.6,370.6 176.5,368.1 178.4,373.6 180.3,366.7 182.3,373.8 184.2,372.1 186.1,366.5 188.0,368.5 189.9,370.3 191.8,370.5 193.7,371.0 195.6,370.3 197.5,368.2 199.4,372.4 201.3,372.1 203.2,370.6 205.1,377.8 207.1,372.5 209.0,363.3 210.9,358.6 212.8,369.7 214.7,370.5 216.6,369.7 218.5,371.5 220.4,360.5 222.3,379.2 224.2,354.6 226.1,376.2 228.0,370.4 230.0,372.1 231.9,368.9 233.8,371.6 235.7,369.9 237.6,366.6 239.5,371.9 241.4,374.3 243.3,374.2 245.2,359.2 247.1,370.0 249.0,378.8 250.9,368.1 252.8,373.2 254.8,368.2 256.7,369.5 258.6,364.6 260.5,365.2 262.4,363.6 264.3,366.3 266.2,363.3 268.1,370.1 270.0,370.0 271.9,363.7 273.8,369.7 275.7,376.7 277.7,369.3 279.6,369.7 281.5,377.4 283.4,363.5 285.3,373.6 287.2,369.4 289.1,378.4 291.0,368.6 292.9,369.5 294.8,367.9 296.7,366.0 298.6,359.2 300.5,373.8 302.5,368.8 304.4,369.8 306.3,361.2 308.2,369.0 310.1,373.4 312.0,371.7 313.9,379.2 315.8,379.2 317.7,363.9 319.6,362.9 321.5,365.5 323.4,368.1 325.4,372.9 327.3,370.8 329.2,366.6 331.1,364.8 333.0,363.9 334.9,372.7 336.8,377.7 338.7,372.3 340.6,372.9 342.5,367.2 344.4,368.3 346.3,369.9 348.2,371.0 350.2,374.0 352.1,371.0 354.0,371.1 355.9,366.2 357.8,372.4 359.7,371.6 361.6,365.4 363.5,362.8 365.4,370.0 367.3,374.4 369.2,370.1 371.1,364.2 373.1,362.9 375.0,373.4 376.9,376.1 378.8,367.9 380.7,374.6 382.6,364.7 384.5,372.1 386.4,373.4 388.3,374.3 390.2,378.3 392.1,372.8 394.0,369.9 395.9,371.1 397.9,367.4 399.8,366.2 401.7,376.4 403.6,371.3 405.5,384.6 407.4,366.7 409.3,366.7 411.2,362.7 413.1,359.8 415.0,368.5 416.9,370.8 418.8,361.3 420.8,374.6 422.7,369.3 424.6,372.3 426.5,361.7 428.4,379.2 430.3,370.5 432.2,375.6 434.1,375.3 436.0,362.4 437.9,373.4 439.8,372.5 441.7,369.4 443.6,369.7 445.6,371.3 447.5,373.8 449.4,367.5 451.3,367.3 453.2,378.6 455.1,368.1 457.0,372.5 458.9,369.8 460.8,367.0 462.7,376.1 464.6,379.2 466.5,372.9 468.5,373.8 470.4,367.6 472.3,363.6 474.2,367.8 476.1,378.0 478.0,377.7 479.9,365.5 481.8,369.9 483.7,374.5 485.6,368.4 487.5,362.2 489.4,367.9 491.3,363.9 493.3,368.4 495.2,372.0 497.1,365.8 499.0,368.5 500.9,372.7 502.8,373.7 504.7,370.4 506.6,374.5 508.5,373.8 510.4,371.2 512.3,371.9 514.2,374.6 516.2,375.1 518.1,360.5 520.0,365.2 521.9,365.4 523.8,376.6 525.7,368.9 527.6,375.3 529.5,382.7 531.4,371.5 533.3,370.6 535.2,379.2 537.1,364.1 539.0,367.6 541.0,367.7 542.9,370.6 544.8,379.1 546.7,373.6 548.6,370.4 550.5,367.1 552.4,371.8 554.3,378.0 556.2,364.0 558.1,372.5 560.0,362.3 561.9,367.4 563.9,371.4 565.8,364.5 567.7,372.4 569.6,379.2 571.5,372.5 573.4,370.9 575.3,375.9 577.2,370.6 579.1,370.1 581.0,373.1 582.9,371.5 584.8,370.6 586.7,369.2 588.7,370.2 590.6,372.8 592.5,370.9 594.4,370.9 596.3,365.6 598.2,370.2 600.1,366.6 602.0,372.1 603.9,365.2 605.8,367.2 607.7,371.0 609.6,369.5 611.6,369.0 613.5,363.3 615.4,374.1 617.3,368.9 619.2,372.4 621.1,376.4 623.0,367.7 624.9,377.3 626.8,371.6 628.7,366.8 630.6,361.0 632.5,375.3 634.4,373.5 636.4,374.3 638.3,372.7 640.2,367.5 642.1,369.9 644.0,372.0 645.9,369.9 647.8,372.6 649.7,371.8 651.6,372.0 653.5,374.4 655.4,372.1 657.3,373.1 659.3,365.4 661.2,365.5 663.1,368.7 665.0,372.9 666.9,361.3 668.8,368.1 670.7,370.0 672.6,377.8 674.5,369.0 676.4,374.7 678.3,362.3 680.2,372.6 682.1,369.8 684.1,379.2 686.0,365.3 687.9,373.3 689.8,364.5 691.7,368.1 693.6,371.0 695.5,370.1 697.4,373.4 699.3,362.5 701.2,377.5 703.1,377.5 705.0,370.0 707.0,373.0 708.9,370.5 710.8,371.5 712.7,367.6 714.6,372.9 716.5,368.8 718.4,370.4 720.3,370.2 722.2,372.2 724.1,364.7 726.0,376.5 727.9,375.9" fill="none" stroke="#ec78ff" stroke-width="1" stroke-linejoin="round" marker-start="url(#mm)" marker-mid="url(#mm)" marker-end="url(#mm)"/><rect x="50" y="20.3" width="1" height="365.4" fill="#000"/><rect x="50" y="385" width="680.2" height="1" fill="#000"/><rect x="50.1" y="385" width="1" height="5" fill="#000"/><rect x="69.18" y="385" width="1" height="5" fill="#000"/><rect x="88.26" y="385" width="1" height="5" fill="#000"/><rect x="107.34" y="385" width="1" height="5" fill="#000"/><rect x="126.42" y="385" width="1" height="5" fill="#000"/><rect x="145.5" y="385" width="1" height="5" fill="#000"/><rect x="164.58" y="385" width="1" height="5" fill="#000"/><rect x="183.66" y="385" width="1" height="5" fill="#000"/><rect x="202.74" y="385" width="1" height="5" fill="#000"/><rect x="221.82" y="385" width="1" height="5" fill="#000"/><rect x="240.9" y="385" width="1" height="5" fill="#000"/><rect x="259.98" y="385" width="1" height="5" fill="#000"/><rect x="279.06" y="385" width="1" height="5" fill="#000"/><rect x="298.14" y="385" width="1" height="5" fill="#000"/><rect x="317.22" y="385" width="1" height="5" fill="#000"/><rect x="336.3" y="385" width="1" height="5" fill="#000"/><rect x="355.38" y="385" width="1" height="5" fill="#000"/><rect x="374.46" y="385" width="1" height="5" fill="#000"/><rect x="393.54" y="385" width="1" height="5" fill="#000"/><rect x="412.62" y="385" width="1" height="5" fill="#000"/><rect x="431.7" y="385" width="1" height="5" fill="#000"/><rect x="450.78" y="385" width="1" height="5" fill="#000"/><rect x="469.86" y="385" width="1" height="5" fill="#000"/><rect x="488.94" y="385" width="1" height="5" fill="#000"/><rect x="508.02" y="385" width="1" height="5" fill="#000"/><rect x="527.1" y="385" width="1" height="5" fill="#000"/><rect x="546.18" y="385" width="1" height="5" fill="#000"/><rect x="565.26" y="385" width="1" height="5" fill="#000"/><rect x="584.34" y="385" width="1" height="5" fill="#000"/><rect x="603.42" y="385" width="1" height="5" fill="#000"/><rect x="622.5" y="385" width="1" height="5" fill="#000"/><rect x="641.58" y="385" width="1" height="5" fill="#000"/><rect x="660.66" y="385" width="1" height="5" fill="#000"/><rect x="679.74" y="385" width="1" height="5" fill="#000"/><rect x="698.82" y="385" width="1" height="5" fill="#000"/><rect x="717.9" y="385" width="1" height="5" fill="#000"/></svg>
<span class="t" style="left:1084.5px;top:396.8px;height:15px;line-height:15px;font-size:11px;">0</span>
<span class="t" style="left:1058.9px;top:332.4px;height:15px;line-height:15px;font-size:11px;letter-spacing:-0.12px;transform:scaleX(0.9042);transform-origin:0 50%;">1000</span>
<span class="t" style="left:1058.9px;top:268px;height:15px;line-height:15px;font-size:11px;letter-spacing:-0.12px;transform:scaleX(0.9042);transform-origin:0 50%;">2000</span>
<span class="t" style="left:1058.9px;top:203.6px;height:15px;line-height:15px;font-size:11px;letter-spacing:-0.12px;transform:scaleX(0.9042);transform-origin:0 50%;">3000</span>
<span class="t" style="left:1058.9px;top:139.2px;height:15px;line-height:15px;font-size:11px;letter-spacing:-0.12px;transform:scaleX(0.9042);transform-origin:0 50%;">4000</span>
<span class="t" style="left:1058.9px;top:74.8px;height:15px;line-height:15px;font-size:11px;letter-spacing:-0.12px;transform:scaleX(0.9042);transform-origin:0 50%;">5000</span>
<span class="t" style="left:1092.6px;top:420.8px;height:15px;line-height:15px;font-size:11px;">0</span>
<span class="t" style="left:1145.24px;top:420.8px;height:15px;line-height:15px;font-size:11px;letter-spacing:-0.12px;transform:scaleX(0.8584);transform-origin:0 50%;">30</span>
<span class="t" style="left:1202.48px;top:420.8px;height:15px;line-height:15px;font-size:11px;letter-spacing:-0.12px;transform:scaleX(0.8584);transform-origin:0 50%;">60</span>
<span class="t" style="left:1259.72px;top:420.8px;height:15px;line-height:15px;font-size:11px;letter-spacing:-0.12px;transform:scaleX(0.8584);transform-origin:0 50%;">90</span>
<span class="t" style="left:1314.21px;top:420.8px;height:15px;line-height:15px;font-size:11px;letter-spacing:-0.12px;transform:scaleX(0.8778);transform-origin:0 50%;">120</span>
<span class="t" style="left:1371.45px;top:420.8px;height:15px;line-height:15px;font-size:11px;letter-spacing:-0.12px;transform:scaleX(0.8778);transform-origin:0 50%;">150</span>
<span class="t" style="left:1428.69px;top:420.8px;height:15px;line-height:15px;font-size:11px;letter-spacing:-0.12px;transform:scaleX(0.8778);transform-origin:0 50%;">180</span>
<span class="t" style="left:1485.93px;top:420.8px;height:15px;line-height:15px;font-size:11px;letter-spacing:-0.12px;transform:scaleX(0.8778);transform-origin:0 50%;">210</span>
<span class="t" style="left:1543.17px;top:420.8px;height:15px;line-height:15px;font-size:11px;letter-spacing:-0.12px;transform:scaleX(0.8778);transform-origin:0 50%;">240</span>
<span class="t" style="left:1600.41px;top:420.8px;height:15px;line-height:15px;font-size:11px;letter-spacing:-0.12px;transform:scaleX(0.8778);transform-origin:0 50%;">270</span>
<span class="t" style="left:1657.65px;top:420.8px;height:15px;line-height:15px;font-size:11px;letter-spacing:-0.12px;transform:scaleX(0.8778);transform-origin:0 50%;">300</span>
<span class="t" style="left:1714.89px;top:420.8px;height:15px;line-height:15px;font-size:11px;letter-spacing:-0.12px;transform:scaleX(0.8778);transform-origin:0 50%;">330</span>
<span class="t" style="left:1041.6px;top:465.4px;height:15px;line-height:15px;font-size:11.2px;letter-spacing:0.39px;">Current-</span>
<span class="t" style="left:1050.2px;top:481.1px;height:15px;line-height:15px;font-size:11.2px;letter-spacing:-0.12px;transform:scaleX(0.9818);transform-origin:0 50%;">Frame</span>
<span class="t" style="left:1102px;top:465.4px;height:15px;line-height:15px;font-size:11.2px;letter-spacing:-0.12px;transform:scaleX(0.9932);transform-origin:0 50%;">Luminous</span>
<span class="t" style="left:1101.5px;top:481.1px;height:15px;line-height:15px;font-size:11.2px;letter-spacing:0.26px;">Intensity</span>
<div class="tb" style="left:1042px;top:499.3px;width:48.5px;height:18.9px;"></div>
<div class="tb" style="left:1098px;top:499.3px;width:56.4px;height:18.9px;"></div>
<div class="" style="left:1161px;top:469px;width:160px;height:18.3px;background:#f8f8f8;"></div>
<div class="b c" style="left:1161px;top:469px;width:17px;height:18.3px;"><svg width="4" height="7" viewBox="0 0 4 7"><polygon points="4,0 4,7 0,3.5" fill="#000"/></svg></div>
<div class="b c" style="left:1304.4px;top:469px;width:16.6px;height:18.3px;"><svg width="4" height="7" viewBox="0 0 4 7"><polygon points="0,0 0,7 4,3.5" fill="#000"/></svg></div>
<div class="" style="left:1179.3px;top:471.4px;width:15.2px;height:14.5px;background:#888;"></div>
<div class="b" style="left:1162px;top:494.3px;width:41px;height:24.3px;"></div>
<span class="t" style="left:1165.75px;top:498.45px;height:15px;line-height:15px;font-size:11.2px;letter-spacing:-0.12px;transform:scaleX(0.9602);transform-origin:0 50%;">-10Sec</span>
<div class="b" style="left:1206px;top:494.3px;width:33px;height:24.3px;"></div>
<span class="t" style="left:1208.75px;top:498.45px;height:15px;line-height:15px;font-size:11.2px;letter-spacing:-0.12px;transform:scaleX(0.9556);transform-origin:0 50%;">-1Sec</span>
<div class="b" style="left:1241.8px;top:494.3px;width:35.4px;height:24.3px;"></div>
<span class="t" style="left:1244.25px;top:498.45px;height:15px;line-height:15px;font-size:11.2px;letter-spacing:-0.12px;transform:scaleX(0.9655);transform-origin:0 50%;">+1Sec</span>
<div class="b" style="left:1279.8px;top:494.3px;width:41.4px;height:24.3px;"></div>
<span class="t" style="left:1282.25px;top:498.45px;height:15px;line-height:15px;font-size:11.2px;letter-spacing:-0.12px;transform:scaleX(0.9682);transform-origin:0 50%;">+10Sec</span>
<div class="tb" style="left:1042.2px;top:528px;width:12px;height:12px;"><svg width="9" height="9" viewBox="0 0 9 9" style="position:absolute;left:1.5px;top:1.5px"><path d="M1 3.2 L3.4 5.6 L8 1 L8 3.4 L3.4 8 L1 5.6 Z" fill="#000"/></svg></div>
<span class="t" style="left:1059.5px;top:526.2px;height:15px;line-height:15px;font-size:11.2px;letter-spacing:0.16px;">Show Image of Clicked point</span>
<div class="tb" style="left:1042.2px;top:544px;width:12px;height:12px;"></div>
<span class="t" style="left:1060.4px;top:542.3px;height:15px;line-height:15px;font-size:11.2px;letter-spacing:0.12px;">Reproduce Aperture Position</span>
<div class="b" style="left:1216px;top:526.5px;width:73px;height:24.3px;"></div>
<span class="t" style="left:1222.75px;top:530.65px;height:15px;line-height:15px;font-size:11.2px;letter-spacing:-0.03px;">Save Image</span>
<div class="b" style="left:1294.3px;top:526.5px;width:118.1px;height:24.3px;"></div>
<span class="t" style="left:1306.6px;top:530.65px;height:15px;line-height:15px;font-size:11.2px;letter-spacing:0.16px;">Copy to ClipBoard</span>
<span class="t" style="left:1327.4px;top:473.5px;height:15px;line-height:15px;font-size:11.2px;">Scale</span>
<div class="tb" style="left:1366.2px;top:467.2px;width:22px;height:18.8px;"></div>
<span class="t" style="left:1370px;top:467.1px;height:15px;line-height:15px;font-size:11.2px;transform:scaleX(0.88);transform-origin:0 50%;">1</span>
<div class="b c" style="left:1390px;top:466.6px;width:17px;height:10.8px;"><svg width="5" height="3" viewBox="0 0 5 3"><polygon points="0,3 5,3 2.5,0" fill="#000"/></svg></div>
<div class="b c" style="left:1390px;top:478.2px;width:17px;height:10.8px;"><svg width="5" height="3" viewBox="0 0 5 3"><polygon points="0,0 5,0 2.5,3" fill="#000"/></svg></div>
<span class="t" style="left:1330.4px;top:497.5px;height:15px;line-height:15px;font-size:11.2px;letter-spacing:-0.12px;transform:scaleX(0.9806);transform-origin:0 50%;">Radius</span>
<div class="tb" style="left:1366.2px;top:498.8px;width:22px;height:18.9px;"></div>
<span class="t" style="left:1369.5px;top:500.75px;height:15px;line-height:15px;font-size:11.2px;transform:scaleX(0.88);transform-origin:0 50%;">2</span>
<div class="b c" style="left:1390px;top:498.4px;width:17px;height:10.9px;"><svg width="5" height="3" viewBox="0 0 5 3"><polygon points="0,3 5,3 2.5,0" fill="#000"/></svg></div>
<div class="b c" style="left:1390px;top:510.3px;width:17px;height:10.9px;"><svg width="5" height="3" viewBox="0 0 5 3"><polygon points="0,0 5,0 2.5,3" fill="#000"/></svg></div>
<div class="gb" style="left:1411.6px;top:467.4px;width:50.4px;height:82.1px;"></div>
<div class="" style="left:1418.7px;top:463.4px;width:36.2px;height:13px;background:#f0f0f0;"></div>
<span class="t" style="left:1420.2px;top:461.6px;height:15px;line-height:15px;font-size:11.2px;letter-spacing:0.46px;">Y Axis</span>
<span class="t" style="left:1418.5px;top:473.8px;height:15px;line-height:15px;font-size:11.2px;letter-spacing:-0.12px;transform:scaleX(0.9544);transform-origin:0 50%;">Min Max</span>
<div class="" style="left:1417.1px;top:486.6px;width:16.7px;height:57.4px;background:#f8f8f8;"></div>
<div class="b c" style="left:1417.1px;top:486.6px;width:16.7px;height:16.4px;"><svg width="7" height="4" viewBox="0 0 7 4"><polygon points="0,4 7,4 3.5,0" fill="#000"/></svg></div>
<div class="b" style="left:1417.1px;top:506px;width:16.7px;height:16.7px;"></div>
<div class="b c" style="left:1417.1px;top:527.4px;width:16.7px;height:16.6px;"><svg width="7" height="4" viewBox="0 0 7 4"><polygon points="0,0 7,0 3.5,4" fill="#000"/></svg></div>
<div class="" style="left:1439.5px;top:486.6px;width:17.5px;height:57.4px;background:#f8f8f8;"></div>
<div class="b c" style="left:1439.5px;top:486.6px;width:17.5px;height:16.4px;"><svg width="7" height="4" viewBox="0 0 7 4"><polygon points="0,4 7,4 3.5,0" fill="#000"/></svg></div>
<div class="b" style="left:1439.5px;top:506px;width:17.5px;height:16.7px;"></div>
<div class="b c" style="left:1439.5px;top:527.4px;width:17.5px;height:16.6px;"><svg width="7" height="4" viewBox="0 0 7 4"><polygon points="0,0 7,0 3.5,4" fill="#000"/></svg></div>
<div class="gb" style="left:1463.5px;top:467.4px;width:61.3px;height:54.7px;"></div>
<div class="" style="left:1470.7px;top:463.4px;width:23px;height:13px;background:#f0f0f0;"></div>
<span class="t" style="left:1472.2px;top:461.6px;height:15px;line-height:15px;font-size:11.2px;letter-spacing:-0.12px;transform:scaleX(0.9608);transform-origin:0 50%;">Line</span>
<div class="tb" style="left:1472.3px;top:477px;width:11.5px;height:11.5px;"><svg width="9" height="9" viewBox="0 0 9 9" style="position:absolute;left:1.25px;top:1.25px"><path d="M1 3.2 L3.4 5.6 L8 1 L8 3.4 L3.4 8 L1 5.6 Z" fill="#000"/></svg></div>
<span class="t" style="left:1491px;top:475.5px;height:15px;line-height:15px;font-size:11.2px;letter-spacing:0.08px;">Axis</span>
<div class="tb" style="left:1472.3px;top:491.5px;width:11.5px;height:11.5px;"><svg width="9" height="9" viewBox="0 0 9 9" style="position:absolute;left:1.25px;top:1.25px"><path d="M1 3.2 L3.4 5.6 L8 1 L8 3.4 L3.4 8 L1 5.6 Z" fill="#000"/></svg></div>
<span class="t" style="left:1491px;top:490px;height:15px;line-height:15px;font-size:11.2px;letter-spacing:-0.12px;transform:scaleX(0.9486);transform-origin:0 50%;">Data</span>
<div class="b" style="left:1472.2px;top:503.3px;width:45.8px;height:14.4px;"></div>
<span class="t" style="left:1478.85px;top:502.5px;height:15px;line-height:15px;font-size:11.2px;letter-spacing:0.23px;">Hilight</span>
<div class="b" style="left:1464.5px;top:526.5px;width:64.5px;height:26.9px;"></div>
<span class="t" style="left:1469.25px;top:531.95px;height:15px;line-height:15px;font-size:11.2px;letter-spacing:0.02px;">[3D] Image</span>
<div class="gb" style="left:1527.5px;top:467.4px;width:56.5px;height:54.7px;"></div>
<div class="" style="left:1534.9px;top:463.4px;width:30.9px;height:13px;background:#f0f0f0;"></div>
<span class="t" style="left:1536.4px;top:461.6px;height:15px;line-height:15px;font-size:11.2px;letter-spacing:-0.12px;transform:scaleX(0.9912);transform-origin:0 50%;">Width</span>
<div class="rb" style="left:1536.3px;top:481.2px;width:12px;height:12px;"></div>
<span class="t" style="left:1554.2px;top:480.2px;height:15px;line-height:15px;font-size:11.2px;letter-spacing:-0.12px;transform:scaleX(0.9415);transform-origin:0 50%;">Part</span>
<div class="rb" style="left:1536.3px;top:502.1px;width:12px;height:12px;"><i></i></div>
<span class="t" style="left:1554.2px;top:501.1px;height:15px;line-height:15px;font-size:11.2px;letter-spacing:-0.12px;transform:scaleX(0.9561);transform-origin:0 50%;">Entire</span>
<div class="b" style="left:1590.4px;top:466.6px;width:142.6px;height:16.8px;"></div>
<span class="t" style="left:1597.6px;top:467px;height:15px;line-height:15px;font-size:11.2px;letter-spacing:0.21px;">Correction for absorption</span>
<div class="b" style="left:1590.4px;top:486.7px;width:102.4px;height:16.7px;"></div>
<span class="t" style="left:1600.2px;top:487.05px;height:15px;line-height:15px;font-size:11.2px;letter-spacing:0.04px;">Noise Reduction</span>
<div class="b" style="left:1696.3px;top:485.8px;width:36.7px;height:17.6px;"></div>
<span class="t" style="left:1700.35px;top:486.6px;height:15px;line-height:15px;font-size:11.2px;letter-spacing:-0.12px;transform:scaleX(0.9938);transform-origin:0 50%;">Reset</span>
<div class="b" style="left:1746px;top:466.6px;width:35.8px;height:23.9px;"></div>
<span class="t" style="left:1750.5px;top:470.55px;height:15px;line-height:15px;font-size:11.2px;letter-spacing:0.16px;">close</span>
<div class="tb" style="left:1588.6px;top:507.2px;width:11.5px;height:11.5px;"><svg width="9" height="9" viewBox="0 0 9 9" style="position:absolute;left:1.25px;top:1.25px"><path d="M1 3.2 L3.4 5.6 L8 1 L8 3.4 L3.4 8 L1 5.6 Z" fill="#000"/></svg></div>
<span class="t" style="left:1606.1px;top:505.8px;height:15px;line-height:15px;font-size:11.2px;letter-spacing:-0.12px;transform:scaleX(0.9539);transform-origin:0 50%;">Information</span>
<div class="gb" style="left:1687.2px;top:516.6px;width:95.6px;height:36.6px;"></div>
<div class="" style="left:1694.1px;top:512.6px;width:35.9px;height:13px;background:#f0f0f0;"></div>
<span class="t" style="left:1695.6px;top:510.8px;height:15px;line-height:15px;font-size:11.2px;letter-spacing:0.11px;">Object</span>
<div class="" style="left:1736.5px;top:503px;width:36px;height:18px;background:#f0f0f0;"></div>
<div class="tb" style="left:1738.6px;top:504.2px;width:11.5px;height:11.5px;"><svg width="9" height="9" viewBox="0 0 9 9" style="position:absolute;left:1.25px;top:1.25px"><path d="M1 3.2 L3.4 5.6 L8 1 L8 3.4 L3.4 8 L1 5.6 Z" fill="#000"/></svg></div>
<span class="t" style="left:1755.8px;top:502.8px;height:15px;line-height:15px;font-size:11.2px;letter-spacing:-0.12px;transform:scaleX(0.9657);transform-origin:0 50%;">ID</span>
<div class="pb" style="left:1694.1px;top:528.3px;width:18.9px;height:16.6px;"></div>
<span class="t" style="left:1700.55px;top:528.9px;height:15px;line-height:15px;font-size:11.2px;">A</span>
<div class="pb" style="left:1716.1px;top:528.3px;width:18.9px;height:16.6px;"></div>
<span class="t" style="left:1722.55px;top:528.9px;height:15px;line-height:15px;font-size:11.2px;">B</span>
<div class="pb" style="left:1737.9px;top:528.3px;width:18.9px;height:16.6px;"></div>
<span class="t" style="left:1744.02px;top:528.9px;height:15px;line-height:15px;font-size:11.2px;">C</span>
<div class="b" style="left:1759.9px;top:528.3px;width:17.5px;height:16.6px;"></div>
<span class="t" style="left:1765.31px;top:528.6px;height:15px;line-height:15px;font-size:11.2px;">L</span>
<div class="b" style="left:1274.4px;top:558.7px;width:120.5px;height:26.9px;overflow:hidden;"><span class="t" style="left:-5.5px;top:4px;height:18px;line-height:18px;font-size:14px;font-weight:bold;letter-spacing:0.05px">Lunar Identification</span></div>
<div class="b" style="left:1404.2px;top:558.7px;width:169px;height:26.9px;"></div>
<span class="t" style="left:1422.7px;top:562.65px;height:18px;line-height:18px;font-size:14px;font-weight:bold;letter-spacing:0.05px;">Diffraction Analysis</span>
<div class="b" style="left:1578.4px;top:558.7px;width:104.8px;height:26.9px;"></div>
<span class="t" style="left:1590.7px;top:562.65px;height:18px;line-height:18px;font-size:14px;font-weight:bold;letter-spacing:-0.05px;transform:scaleX(0.9602);transform-origin:0 50%;">Make Report</span>
<div class="" style="left:1035px;top:592px;width:753px;height:2px;border-top:1px solid #a0a0a0;border-bottom:1px solid #fff;"></div>
<div class="gb" style="left:1041.4px;top:617.9px;width:736.4px;height:91.9px;"></div>
<div class="" style="left:1048.1px;top:613.9px;width:68.6px;height:13px;background:#f0f0f0;"></div>
<span class="t" style="left:1049.6px;top:612.1px;height:15px;line-height:15px;font-size:11.2px;letter-spacing:0.42px;">S/N vs Error</span>
<span class="t" style="left:1051.1px;top:629.3px;height:17px;line-height:17px;font-size:13px;font-weight:bold;letter-spacing:0.03px;">S/N (Full drop)</span>
<div class="tb" style="left:1154.3px;top:628px;width:56.1px;height:26.2px;"></div>
<span class="t" style="left:1161px;top:630.9px;height:19px;line-height:19px;font-size:15px;font-weight:bold;color:#0000ff;letter-spacing:0.42px;">4.9</span>
<span class="t" style="left:1235.3px;top:629.3px;height:17px;line-height:17px;font-size:13px;font-weight:bold;letter-spacing:-0.05px;transform:scaleX(0.955);transform-origin:0 50%;">S/N</span>
<div class="tb" style="left:1266.2px;top:627.4px;width:48.1px;height:25.1px;"></div>
<span class="t" style="left:1269px;top:629.95px;height:18px;line-height:18px;font-size:14px;font-weight:bold;color:#ff0000;letter-spacing:0.02px;">4.6</span>
<span class="t" style="left:1322.2px;top:629.3px;height:17px;line-height:17px;font-size:13px;font-weight:bold;letter-spacing:0.23px;">expected on</span>
<div class="tb" style="left:1410.4px;top:627.4px;width:47.9px;height:25.1px;"></div>
<span class="t" style="left:1413.3px;top:629.95px;height:18px;line-height:18px;font-size:14px;font-weight:bold;letter-spacing:0.02px;">3.3</span>
<span class="t" style="left:1466.3px;top:629.3px;height:17px;line-height:17px;font-size:13px;font-weight:bold;letter-spacing:0.12px;">Mag drop</span>
<span class="t" style="left:1562.1px;top:629.3px;height:17px;line-height:17px;font-size:13px;font-weight:bold;letter-spacing:0.21px;">Frame exposure</span>
<div class="tb" style="left:1682px;top:627.4px;width:48.3px;height:25.1px;"></div>
<span class="t" style="left:1685.2px;top:629.95px;height:18px;line-height:18px;font-size:14px;font-weight:bold;letter-spacing:-0.05px;transform:scaleX(0.9803);transform-origin:0 50%;">338</span>
<span class="t" style="left:1738px;top:629.3px;height:17px;line-height:17px;font-size:13px;font-weight:bold;letter-spacing:-0.08px;">msec</span>
<span class="t" style="left:1050.2px;top:660.8px;height:17px;line-height:17px;font-size:13px;font-weight:bold;letter-spacing:0.04px;">Fresnel</span>
<span class="t" style="left:1050.2px;top:676.7px;height:17px;line-height:17px;font-size:13px;font-weight:bold;letter-spacing:0.04px;">Number</span>
<div class="tb" style="left:1106px;top:667.1px;width:48.4px;height:24.7px;"></div>
<span class="t" style="left:1109.3px;top:669.95px;height:18px;line-height:18px;font-size:14px;font-weight:bold;letter-spacing:-0.05px;transform:scaleX(0.9631);transform-origin:0 50%;">601</span>
<span class="t" style="left:1170.6px;top:660.8px;height:17px;line-height:17px;font-size:13px;font-weight:bold;letter-spacing:0.27px;">Lower Limit</span>
<span class="t" style="left:1178.2px;top:676.7px;height:17px;line-height:17px;font-size:13px;font-weight:bold;letter-spacing:0.07px;">for detect</span>
<div class="tb" style="left:1249.9px;top:667.1px;width:56.5px;height:24.7px;"></div>
<span class="t" style="left:1253.8px;top:669.95px;height:18px;line-height:18px;font-size:14px;font-weight:bold;color:#0000ff;letter-spacing:-0.11px;">1056</span>
<span class="t" style="left:1306.6px;top:669.5px;height:17px;line-height:17px;font-size:13px;font-weight:bold;letter-spacing:-0.05px;transform:scaleX(0.9638);transform-origin:0 50%;">msec</span>
<span class="t" style="left:1354.1px;top:660.8px;height:17px;line-height:17px;font-size:13px;font-weight:bold;letter-spacing:0.14px;">Predicted</span>
<span class="t" style="left:1354.1px;top:677.2px;height:16px;line-height:16px;font-size:12.5px;font-weight:bold;letter-spacing:-0.12px;transform:scaleX(0.9579);transform-origin:0 50%;">Time Error</span>
<div class="tb" style="left:1426px;top:667.1px;width:63.8px;height:24.7px;"></div>
<span class="t" style="left:1429.3px;top:669.95px;height:18px;line-height:18px;font-size:14px;font-weight:bold;color:#ff0000;letter-spacing:-0.13px;">218</span>
<span class="t" style="left:1490.4px;top:677.1px;height:17px;line-height:17px;font-size:13px;font-weight:bold;letter-spacing:-0.05px;transform:scaleX(0.9849);transform-origin:0 50%;">msec</span>
<span class="t" style="left:1538px;top:660.8px;height:17px;line-height:17px;font-size:13px;font-weight:bold;letter-spacing:0.03px;">Expected Error for</span>
<span class="t" style="left:1538px;top:677.1px;height:17px;line-height:17px;font-size:13px;font-weight:bold;letter-spacing:0.23px;">Analyzing event time</span>
<div class="tb" style="left:1682px;top:667.1px;width:48.3px;height:24.7px;"></div>
<span class="t" style="left:1685.2px;top:669.95px;height:18px;line-height:18px;font-size:14px;font-weight:bold;letter-spacing:-0.02px;">77.3</span>
<span class="t" style="left:1735.2px;top:677.1px;height:17px;line-height:17px;font-size:13px;font-weight:bold;letter-spacing:-0.05px;transform:scaleX(0.9849);transform-origin:0 50%;">msec</span>
</body></html>
